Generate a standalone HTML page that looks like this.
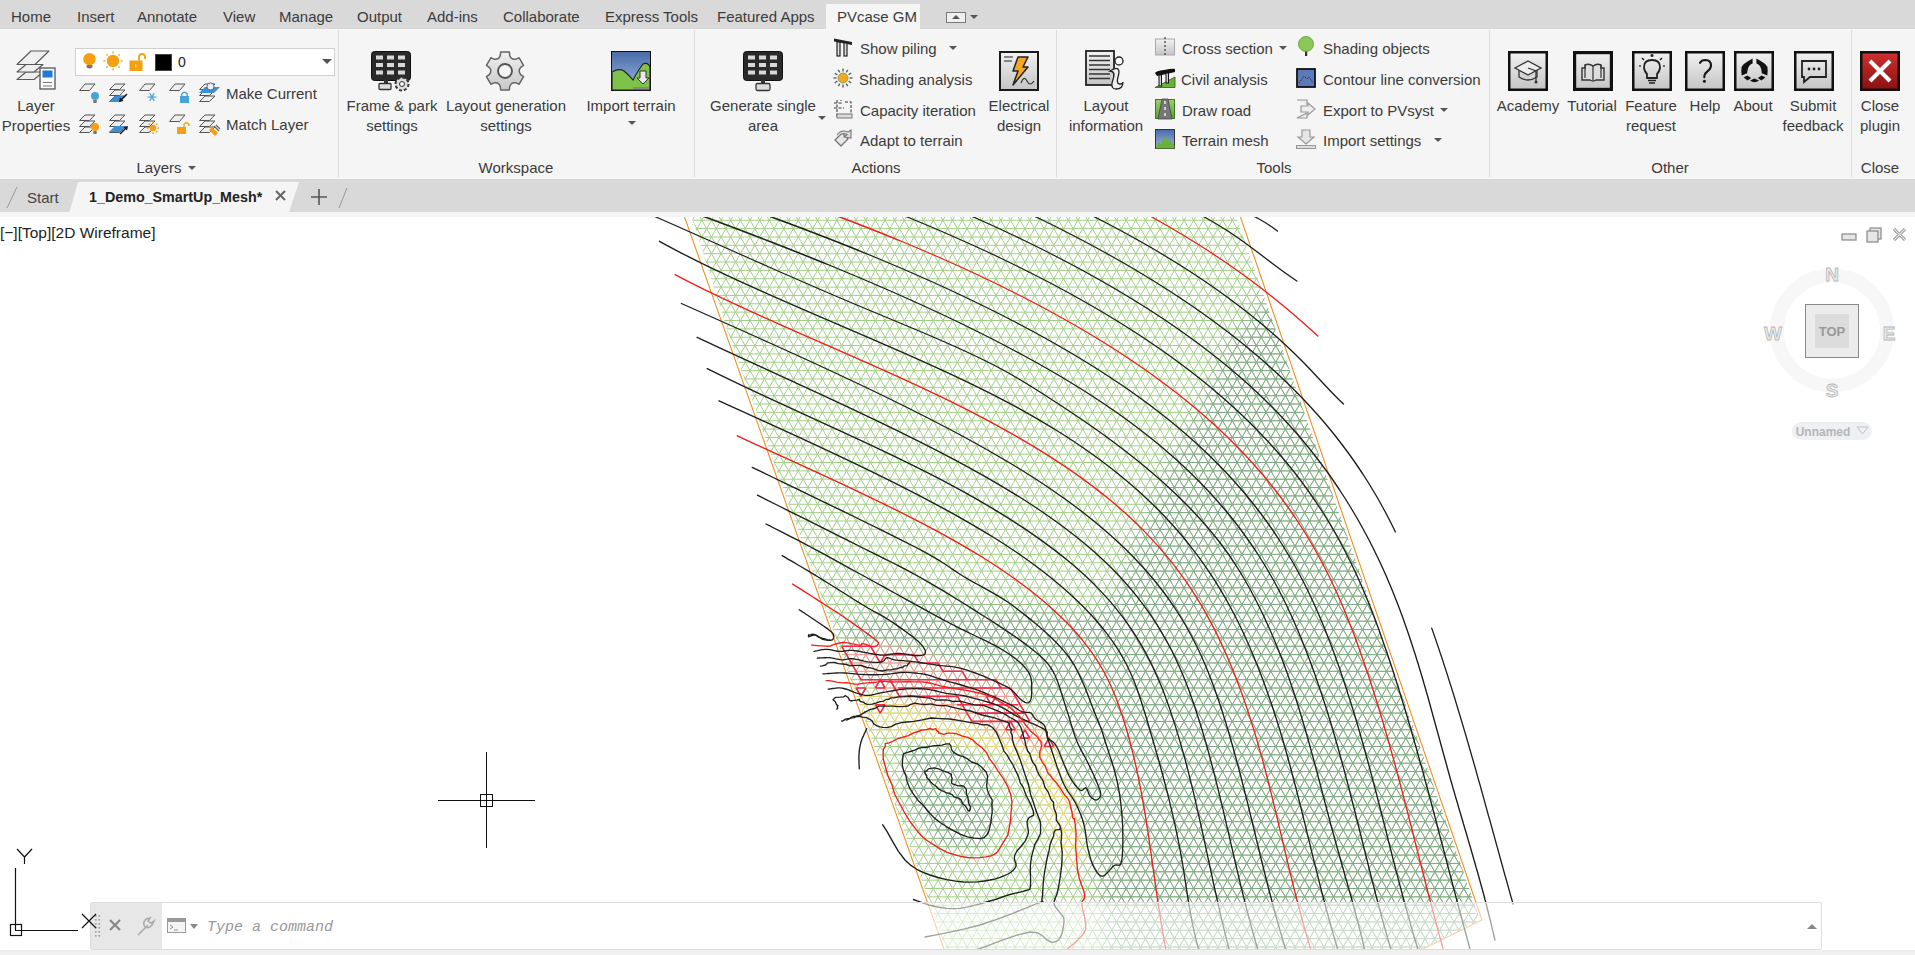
<!DOCTYPE html><html><head><meta charset="utf-8"><style>
*{margin:0;padding:0;box-sizing:border-box}
html,body{width:1915px;height:955px;overflow:hidden;background:#fff;font-family:"Liberation Sans",sans-serif;color:#333}
.a{position:absolute}
.t{position:absolute;font-size:15px;line-height:15px;white-space:nowrap;color:#3b3b3b}
.c{text-align:center}
#menu{left:0;top:0;width:1915px;height:29px;background:#d9d9d9}
#ribbon{left:0;top:29px;width:1915px;height:150px;background:#f5f5f5}
#tabs{left:0;top:179px;width:1915px;height:33px;background:#d9d9d9}
#strip{left:0;top:212px;width:1915px;height:5px;background:#f5f5f5}
.sep{position:absolute;top:30px;width:1px;height:147px;background:#dcdcdc}
svg{position:absolute;overflow:visible}
</style></head><body>
<div id="menu" class="a"></div><div id="ribbon" class="a"></div><div id="tabs" class="a"></div><div id="strip" class="a"></div>
<div class="a" style="left:826px;top:4px;width:94px;height:25px;background:#f5f5f5"></div>
<div class="t" style="left:11px;top:9px">Home</div>
<div class="t" style="left:77px;top:9px">Insert</div>
<div class="t" style="left:137px;top:9px">Annotate</div>
<div class="t" style="left:223px;top:9px">View</div>
<div class="t" style="left:279px;top:9px">Manage</div>
<div class="t" style="left:357px;top:9px">Output</div>
<div class="t" style="left:427px;top:9px">Add-ins</div>
<div class="t" style="left:503px;top:9px">Collaborate</div>
<div class="t" style="left:605px;top:9px">Express Tools</div>
<div class="t" style="left:717px;top:9px">Featured Apps</div>
<div class="t" style="left:837px;top:9px">PVcase GM</div>
<div class="sep" style="left:338px"></div>
<div class="sep" style="left:694px"></div>
<div class="sep" style="left:1056px"></div>
<div class="sep" style="left:1489px"></div>
<div class="sep" style="left:1851px"></div>
<div class="t c" style="left:99px;width:120px;top:160px">Layers</div>
<div class="t c" style="left:456px;width:120px;top:160px">Workspace</div>
<div class="t c" style="left:816px;width:120px;top:160px">Actions</div>
<div class="t c" style="left:1214px;width:120px;top:160px">Tools</div>
<div class="t c" style="left:1610px;width:120px;top:160px">Other</div>
<div class="t c" style="left:1820px;width:120px;top:160px">Close</div>
<div class="t c" style="left:-34px;width:140px;top:98px">Layer</div>
<div class="t c" style="left:-34px;width:140px;top:118px">Properties</div>
<div class="t c" style="left:322px;width:140px;top:98px">Frame &amp; park</div>
<div class="t c" style="left:322px;width:140px;top:118px">settings</div>
<div class="t c" style="left:436px;width:140px;top:98px">Layout generation</div>
<div class="t c" style="left:436px;width:140px;top:118px">settings</div>
<div class="t c" style="left:561px;width:140px;top:98px">Import terrain</div>
<div class="t c" style="left:693px;width:140px;top:98px">Generate single</div>
<div class="t c" style="left:693px;width:140px;top:118px">area</div>
<div class="t c" style="left:949px;width:140px;top:98px">Electrical</div>
<div class="t c" style="left:949px;width:140px;top:118px">design</div>
<div class="t c" style="left:1036px;width:140px;top:98px">Layout</div>
<div class="t c" style="left:1036px;width:140px;top:118px">information</div>
<div class="t c" style="left:1458px;width:140px;top:98px">Academy</div>
<div class="t c" style="left:1522px;width:140px;top:98px">Tutorial</div>
<div class="t c" style="left:1581px;width:140px;top:98px">Feature</div>
<div class="t c" style="left:1581px;width:140px;top:118px">request</div>
<div class="t c" style="left:1635px;width:140px;top:98px">Help</div>
<div class="t c" style="left:1683px;width:140px;top:98px">About</div>
<div class="t c" style="left:1743px;width:140px;top:98px">Submit</div>
<div class="t c" style="left:1743px;width:140px;top:118px">feedback</div>
<div class="t c" style="left:1810px;width:140px;top:98px">Close</div>
<div class="t c" style="left:1810px;width:140px;top:118px">plugin</div>
<div class="t" style="left:226px;top:86px">Make Current</div>
<div class="t" style="left:226px;top:117px">Match Layer</div>
<div class="t" style="left:860px;top:41px">Show piling</div>
<div class="t" style="left:859px;top:72px">Shading analysis</div>
<div class="t" style="left:860px;top:103px">Capacity iteration</div>
<div class="t" style="left:860px;top:133px">Adapt to terrain</div>
<div class="t" style="left:1182px;top:41px">Cross section</div>
<div class="t" style="left:1181px;top:72px">Civil analysis</div>
<div class="t" style="left:1182px;top:103px">Draw road</div>
<div class="t" style="left:1182px;top:133px">Terrain mesh</div>
<div class="t" style="left:1323px;top:41px">Shading objects</div>
<div class="t" style="left:1323px;top:72px">Contour line conversion</div>
<div class="t" style="left:1323px;top:103px">Export to PVsyst</div>
<div class="t" style="left:1323px;top:133px">Import settings</div>
<svg width="0" height="0" style="position:absolute"><defs>
<linearGradient id="gbox" x1="0" y1="0" x2="0" y2="1"><stop offset="0" stop-color="#f2f2f2"/><stop offset="1" stop-color="#c4c4c4"/></linearGradient>
<linearGradient id="gsky" x1="0" y1="0" x2="0" y2="1"><stop offset="0" stop-color="#4a6aa8"/><stop offset="1" stop-color="#9bb8e0"/></linearGradient>
<linearGradient id="ggear" x1="0" y1="0" x2="0" y2="1"><stop offset="0" stop-color="#f0f0f0"/><stop offset="1" stop-color="#c8c8c8"/></linearGradient>
<linearGradient id="gred" x1="0" y1="0" x2="0" y2="1"><stop offset="0" stop-color="#d03030"/><stop offset="1" stop-color="#8a1010"/></linearGradient>
<linearGradient id="ggrass" x1="0" y1="0" x2="0" y2="1"><stop offset="0" stop-color="#9ad06a"/><stop offset="1" stop-color="#5aa030"/></linearGradient>
</defs></svg><svg style="left:16px;top:50px" width="42" height="42" viewBox="0 0 42 42" ><g fill="#f0f0f0" stroke="#5a5a5a" stroke-width="1.2" stroke-linejoin="round">
<path d="M1 29.5 L10 22 L27 22 L18 29.5 Z" fill="#eee"/>
<path d="M1 22 L10 14.5 L27 14.5 L18 22 Z" fill="#eee"/>
<path d="M1 14.5 L15 1 L33 1 L19 14.5 Z"/>
</g>
<rect x="24" y="18" width="15" height="21" fill="#fafafa" stroke="#555" stroke-width="1.3"/>
<rect x="26.5" y="20.5" width="10" height="7" fill="#1e7ad6"/>
<path d="M27 32.5 H36 M27 36 H36" stroke="#777" stroke-width="1"/></svg><div class="a" style="left:75px;top:48px;width:260px;height:28px;background:#fff;border:1px solid #cfcfcf"></div><svg style="left:83px;top:52.5px" width="14" height="18" viewBox="0 0 14 18" ><circle cx="6.5" cy="6.2" r="6.2" fill="#f4a013"/><path d="M3.6 12 H9.4 V14.5 Q6.5 16.5 3.6 14.5 Z" fill="#777"/></svg><svg style="left:103.3px;top:51.4px" width="20" height="20" viewBox="0 0 20 20" ><circle cx="10" cy="10" r="6.2" fill="#f4a013"/><g stroke="#f4a013" stroke-width="1.3"><line x1="17.6" y1="10.0" x2="19.6" y2="10.0"/><line x1="15.4" y1="15.4" x2="16.8" y2="16.8"/><line x1="10.0" y1="17.6" x2="10.0" y2="19.6"/><line x1="4.6" y1="15.4" x2="3.2" y2="16.8"/><line x1="2.4" y1="10.0" x2="0.4" y2="10.0"/><line x1="4.6" y1="4.6" x2="3.2" y2="3.2"/><line x1="10.0" y1="2.4" x2="10.0" y2="0.4"/><line x1="15.4" y1="4.6" x2="16.8" y2="3.2"/></g></svg><svg style="left:128.5px;top:52.5px" width="20" height="20" viewBox="0 0 20 20" ><g transform="scale(1.0)"><rect x="0.5" y="7.5" width="13" height="10.5" fill="#f4a013"/><path d="M10 7.5 V4 Q10 1 13 1 Q16 1 16 4 V6" fill="none" stroke="#f4a013" stroke-width="1.8"/><rect x="6.3" y="11.5" width="1" height="3" fill="#fff"/></g></svg><div class="a" style="left:155px;top:54px;width:17px;height:17px;background:#000;border:1px solid #444"></div><div class="t" style="left:178px;top:55px;font-size:14px;color:#222">0</div><svg style="left:322px;top:59px" width="10" height="6" viewBox="0 0 10 6" ><path d="M0 0 H10 L5 5 Z" fill="#555"/></svg><svg style="left:79px;top:83px" width="20" height="20" viewBox="0 0 20 20" ><g fill="#eee" stroke="#555" stroke-width="1" stroke-linejoin="round"><path d="M0.5 7.5 L6 1 H16 L10.5 7.5 Z"/></g></svg><svg style="left:79px;top:114px" width="20" height="20" viewBox="0 0 20 20" ><g fill="#eee" stroke="#555" stroke-width="1" stroke-linejoin="round"><path d="M0.5 18.5 L6 13 H16 L10.5 18.5 Z"/><path d="M0.5 12.5 L6 7 H16 L10.5 12.5 Z"/><path d="M0.5 6.5 L6 1 H16 L10.5 6.5 Z"/></g></svg><svg style="left:109px;top:83px" width="20" height="20" viewBox="0 0 20 20" ><g fill="#eee" stroke="#555" stroke-width="1" stroke-linejoin="round"><path d="M0.5 18.5 L6 13 H16 L10.5 18.5 Z"/><path d="M0.5 12.5 L6 7 H16 L10.5 12.5 Z"/><path d="M0.5 6.5 L6 1 H16 L10.5 6.5 Z"/></g></svg><svg style="left:109px;top:114px" width="20" height="20" viewBox="0 0 20 20" ><g fill="#eee" stroke="#555" stroke-width="1" stroke-linejoin="round"><path d="M0.5 18.5 L6 13 H16 L10.5 18.5 Z"/><path d="M0.5 12.5 L6 7 H16 L10.5 12.5 Z"/><path d="M0.5 6.5 L6 1 H16 L10.5 6.5 Z"/></g></svg><svg style="left:139px;top:83px" width="20" height="20" viewBox="0 0 20 20" ><g fill="#eee" stroke="#555" stroke-width="1" stroke-linejoin="round"><path d="M0.5 7.5 L6 1 H16 L10.5 7.5 Z"/></g></svg><svg style="left:139px;top:114px" width="20" height="20" viewBox="0 0 20 20" ><g fill="#eee" stroke="#555" stroke-width="1" stroke-linejoin="round"><path d="M0.5 18.5 L6 13 H16 L10.5 18.5 Z"/><path d="M0.5 12.5 L6 7 H16 L10.5 12.5 Z"/><path d="M0.5 6.5 L6 1 H16 L10.5 6.5 Z"/></g></svg><svg style="left:169px;top:83px" width="20" height="20" viewBox="0 0 20 20" ><g fill="#eee" stroke="#555" stroke-width="1" stroke-linejoin="round"><path d="M0.5 7.5 L6 1 H16 L10.5 7.5 Z"/></g></svg><svg style="left:169px;top:114px" width="20" height="20" viewBox="0 0 20 20" ><g fill="#eee" stroke="#555" stroke-width="1" stroke-linejoin="round"><path d="M0.5 7.5 L6 1 H16 L10.5 7.5 Z"/></g></svg><svg style="left:199px;top:83px" width="20" height="20" viewBox="0 0 20 20" ><g fill="#eee" stroke="#555" stroke-width="1" stroke-linejoin="round"><path d="M0.5 18.5 L6 13 H16 L10.5 18.5 Z"/><path d="M0.5 12.5 L6 7 H16 L10.5 12.5 Z"/><path d="M0.5 6.5 L6 1 H16 L10.5 6.5 Z"/></g></svg><svg style="left:199px;top:114px" width="20" height="20" viewBox="0 0 20 20" ><g fill="#eee" stroke="#555" stroke-width="1" stroke-linejoin="round"><path d="M0.5 18.5 L6 13 H16 L10.5 18.5 Z"/><path d="M0.5 12.5 L6 7 H16 L10.5 12.5 Z"/><path d="M0.5 6.5 L6 1 H16 L10.5 6.5 Z"/></g></svg><svg style="left:89px;top:90px" width="12" height="14" viewBox="0 0 12 14" ><circle cx="6" cy="6" r="4" fill="#4aa3d8"/><rect x="4.3" y="10" width="3.4" height="3" fill="#777"/></svg><svg style="left:109px;top:93px" width="22" height="11" viewBox="0 0 22 11" ><path d="M0 9 L6 3 H17 L11 9 Z" fill="#3d8fd6"/><path d="M18 1 L12 7" stroke="#111" stroke-width="1.4"/><path d="M10 9 L11 4.5 L14.5 8 Z" fill="#111"/></svg><svg style="left:147px;top:92px" width="10" height="10" viewBox="0 0 10 10" ><g stroke="#4aa3d8" stroke-width="1.2"><line x1="9.5" y1="5.0" x2="0.5" y2="5.0"/><line x1="7.2" y1="8.9" x2="2.7" y2="1.1"/><line x1="2.8" y1="8.9" x2="7.2" y2="1.1"/></g></svg><svg style="left:179px;top:90px" width="12" height="14" viewBox="0 0 12 14" ><rect x="1" y="6" width="9" height="7" fill="#4aa3d8"/><path d="M2.8 6 V4 Q5.5 0.5 8.2 4 V6" fill="none" stroke="#4aa3d8" stroke-width="1.4"/></svg><svg style="left:199px;top:82px" width="22" height="12" viewBox="0 0 22 12" ><path d="M0 11 L6 5 H21 L15 11 Z" fill="#3d8fd6"/><circle cx="11.5" cy="4.5" r="3.6" fill="#eee" stroke="#666" stroke-width="1"/></svg><svg style="left:89px;top:121px" width="12" height="14" viewBox="0 0 12 14" ><circle cx="6" cy="6" r="4" fill="#f4a013"/><rect x="4.3" y="10" width="3.4" height="3" fill="#777"/></svg><svg style="left:109px;top:124px" width="22" height="11" viewBox="0 0 22 11" ><path d="M0 8 L6 2 H17 L11 8 Z" fill="#3d8fd6"/><path d="M11 10 L17 4" stroke="#111" stroke-width="1.4"/><path d="M19 2 L18 6.5 L14.5 3 Z" fill="#111"/></svg><svg style="left:147px;top:122px" width="12" height="12" viewBox="0 0 12 12" ><circle cx="6" cy="6" r="3.2" fill="#f4a013"/><circle cx="11.2" cy="6.0" r="0.9" fill="#f4a013"/><circle cx="9.7" cy="9.7" r="0.9" fill="#f4a013"/><circle cx="6.0" cy="11.2" r="0.9" fill="#f4a013"/><circle cx="2.3" cy="9.7" r="0.9" fill="#f4a013"/><circle cx="0.8" cy="6.0" r="0.9" fill="#f4a013"/><circle cx="2.3" cy="2.3" r="0.9" fill="#f4a013"/><circle cx="6.0" cy="0.8" r="0.9" fill="#f4a013"/><circle cx="9.7" cy="2.3" r="0.9" fill="#f4a013"/></svg><svg style="left:176px;top:121px" width="14" height="14" viewBox="0 0 14 14" ><rect x="1" y="6" width="9" height="7" fill="#f4a013"/><path d="M8 6 V3.5 Q10.5 0 13 3.5 V5" fill="none" stroke="#f4a013" stroke-width="1.4"/></svg><svg style="left:208px;top:124px" width="12" height="11" viewBox="0 0 12 11" ><path d="M1 6 L4 3 L10 9 L7 12 Z" fill="#f4a013"/><path d="M6 2 L11 7 M8 1 L12 5" stroke="#666" stroke-width="1.2"/></svg><svg style="left:371px;top:51px" width="42" height="42" viewBox="0 0 42 42" ><rect x="0.5" y="0.5" width="39" height="29" rx="3" fill="#2a2a2a" stroke="#111"/><rect x="5" y="4.5" width="7" height="4" fill="#d8d8d8"/><rect x="16" y="4.5" width="7" height="4" fill="#d8d8d8"/><rect x="27" y="4.5" width="7" height="4" fill="#d8d8d8"/><rect x="5" y="12.0" width="7" height="4" fill="#d8d8d8"/><rect x="16" y="12.0" width="7" height="4" fill="#d8d8d8"/><rect x="27" y="12.0" width="7" height="4" fill="#d8d8d8"/><rect x="5" y="19.5" width="7" height="4" fill="#d8d8d8"/><rect x="16" y="19.5" width="7" height="4" fill="#d8d8d8"/><rect x="27" y="19.5" width="7" height="4" fill="#d8d8d8"/><rect x="13" y="29" width="4" height="4" fill="#333"/><rect x="8" y="32.5" width="12" height="6" rx="1" fill="#ddd" stroke="#333" stroke-width="1.3"/><circle cx="31" cy="33" r="6.5" fill="#ddd" stroke="#333" stroke-width="2" stroke-dasharray="3 2"/><circle cx="31" cy="33" r="2.5" fill="#f5f5f5" stroke="#333"/></svg><svg style="left:485px;top:51px" width="40" height="40" viewBox="0 0 40 40" ><path d="M15.26 4.51L15.64 1.10L24.36 1.10L24.74 4.51Q26.30 9.09 31.05 8.15L34.19 6.77L38.55 14.33L35.78 16.36Q32.60 20.00 35.78 23.64L38.55 25.67L34.19 33.23L31.05 31.85Q26.30 30.91 24.74 35.49L24.36 38.90L15.64 38.90L15.26 35.49Q13.70 30.91 8.95 31.85L5.81 33.23L1.45 25.67L4.22 23.64Q7.40 20.00 4.22 16.36L1.45 14.33L5.81 6.77L8.95 8.15Q13.70 9.09 15.26 4.51Z" fill="url(#ggear)" stroke="#666" stroke-width="1.5" stroke-linejoin="round"/><circle cx="20" cy="20" r="7" fill="#f5f5f5" stroke="#555" stroke-width="1.9"/></svg><svg style="left:611px;top:51px" width="40" height="40" viewBox="0 0 40 40" ><rect x="0.5" y="0.5" width="39" height="39" fill="url(#gsky)" stroke="#111"/><path d="M1 21 Q8 17 13 20 Q19 25 22 29 Q28 18 32 13 Q37 11 39 16 V39 H1 Z" fill="#7ec24a" stroke="#222" stroke-width="1.2"/><path d="M29 20 H35 V27 H38 L32 33 L26 27 H29 Z" fill="#e8e8e8" stroke="#333" stroke-width="1"/><rect x="22" y="36" width="16" height="2" fill="#888"/></svg><svg style="left:743px;top:51px" width="42" height="42" viewBox="0 0 42 42" ><rect x="0.5" y="0.5" width="39" height="29" rx="3" fill="#2a2a2a" stroke="#111"/><rect x="5" y="4.5" width="7" height="4" fill="#d8d8d8"/><rect x="16" y="4.5" width="7" height="4" fill="#d8d8d8"/><rect x="27" y="4.5" width="7" height="4" fill="#d8d8d8"/><rect x="5" y="12.0" width="7" height="4" fill="#d8d8d8"/><rect x="16" y="12.0" width="7" height="4" fill="#d8d8d8"/><rect x="27" y="12.0" width="7" height="4" fill="#d8d8d8"/><rect x="5" y="19.5" width="7" height="4" fill="#d8d8d8"/><rect x="16" y="19.5" width="7" height="4" fill="#d8d8d8"/><rect x="27" y="19.5" width="7" height="4" fill="#d8d8d8"/><rect x="18" y="29" width="4" height="4" fill="#333"/><rect x="13" y="32.5" width="14" height="7" rx="1.5" fill="#ddd" stroke="#333" stroke-width="1.3"/></svg><svg style="left:833px;top:37px" width="20" height="20" viewBox="0 0 20 20" ><path d="M1 1.5 L19 5 L19 8 L1 4.5 Z" fill="#222"/><rect x="4" y="5" width="3" height="14" fill="#ddd" stroke="#222" stroke-width="1.2"/><rect x="11" y="6" width="3" height="13" fill="#ddd" stroke="#222" stroke-width="1.2"/></svg><svg style="left:833px;top:68px" width="20" height="20" viewBox="0 0 20 20" ><circle cx="10" cy="10" r="5" fill="#f5a623" stroke="#6aa84f" stroke-width="0.8"/><g stroke="#666" stroke-width="1.5"><line x1="16.5" y1="10.0" x2="19.5" y2="10.0"/><line x1="15.6" y1="13.2" x2="18.2" y2="14.8"/><line x1="13.2" y1="15.6" x2="14.8" y2="18.2"/><line x1="10.0" y1="16.5" x2="10.0" y2="19.5"/><line x1="6.8" y1="15.6" x2="5.3" y2="18.2"/><line x1="4.4" y1="13.2" x2="1.8" y2="14.8"/><line x1="3.5" y1="10.0" x2="0.5" y2="10.0"/><line x1="4.4" y1="6.8" x2="1.8" y2="5.3"/><line x1="6.7" y1="4.4" x2="5.2" y2="1.8"/><line x1="10.0" y1="3.5" x2="10.0" y2="0.5"/><line x1="13.2" y1="4.4" x2="14.8" y2="1.8"/><line x1="15.6" y1="6.7" x2="18.2" y2="5.2"/></g></svg><svg style="left:833px;top:99px" width="20" height="20" viewBox="0 0 20 20" ><g fill="none" stroke="#777" stroke-width="1.6" stroke-dasharray="3 1.5"><path d="M1 4 H8 V1 M12 3 H18 V14 M4 1 V17 H19"/><path d="M1 9 H11"/></g><rect x="4" y="15" width="15" height="4" fill="#ddd" stroke="#777"/></svg><svg style="left:833px;top:129px" width="20" height="20" viewBox="0 0 20 20" ><path d="M2 11 L9 4 L15 10 L8 17 Z" fill="#e6e6e6" stroke="#777" stroke-width="1.3"/><path d="M4 6 Q8 0 15 3 L18 1 L18 9 L11 8 L14 5.5 Q9 3 6 7" fill="#ddd" stroke="#777" stroke-width="1.1"/></svg><svg style="left:999px;top:51px" width="40" height="40" viewBox="0 0 40 40" ><rect x="1" y="1" width="38" height="38" fill="url(#gbox)" stroke="#1a1a1a" stroke-width="2"/><path d="M5 6 H14 M5 10 H13" stroke="#666" stroke-width="1.3"/><path d="M19 6 L29 6 L24 16 L29 16 L14 34 L19 20 L14 20 Z" fill="#f5a623" stroke="#222" stroke-width="1.5" stroke-linejoin="round"/><path d="M22 32 Q25 24 28 30 Q31 36 35 30" fill="none" stroke="#333" stroke-width="1.2"/></svg><svg style="left:1085px;top:50px" width="40" height="41" viewBox="0 0 40 41" ><rect x="1" y="1" width="28" height="34" fill="url(#gbox)" stroke="#222" stroke-width="1.8"/><line x1="4" y1="6.0" x2="25" y2="6.0" stroke="#333" stroke-width="1.5"/><line x1="4" y1="10.5" x2="25" y2="10.5" stroke="#333" stroke-width="1.5"/><line x1="4" y1="15.0" x2="25" y2="15.0" stroke="#333" stroke-width="1.5"/><line x1="4" y1="19.5" x2="25" y2="19.5" stroke="#333" stroke-width="1.5"/><line x1="4" y1="24.0" x2="25" y2="24.0" stroke="#333" stroke-width="1.5"/><line x1="4" y1="28.5" x2="25" y2="28.5" stroke="#333" stroke-width="1.5"/><circle cx="34" cy="11" r="4" fill="#fafafa" stroke="#222" stroke-width="1.3"/><path d="M25 21 Q31 17 33 19 Q35 21 33 27 Q31 34 35 34 Q38 34 38 32 Q38 39 31 39 Q26 39 27 33 Q29 27 29 24 Q28 21 25 21 Z" fill="#eee" stroke="#222" stroke-width="1.3"/></svg><svg style="left:1155px;top:37px" width="20" height="20" viewBox="0 0 20 20" ><rect x="0.5" y="2" width="19" height="16" fill="url(#gbox)" stroke="#aaa"/><path d="M10 0 V20" stroke="#444" stroke-width="1.3" stroke-dasharray="2 2"/></svg><svg style="left:1155px;top:68px" width="20" height="20" viewBox="0 0 20 20" ><path d="M0 19.5 L20 9 V19.5 Z" fill="#6ab03c" stroke="#2b5e10" stroke-width="0.8"/><path d="M0 5 Q1 3 9 2 Q18 0 20 1 V4 Q12 6 2 8 Z" fill="#111"/><rect x="4" y="7" width="2.5" height="11" fill="#ccc" stroke="#111" stroke-width="1"/><rect x="11" y="5" width="2.5" height="10" fill="#ccc" stroke="#111" stroke-width="1"/></svg><svg style="left:1155px;top:99px" width="20" height="20" viewBox="0 0 20 20" ><rect x="0.5" y="0.5" width="19" height="19" fill="url(#ggrass)" stroke="#3d7a20"/><path d="M7 0 H13 L17 20 H3 Z" fill="#777" stroke="#444" stroke-width="0.8"/><path d="M10 2 V5 M10 8 V11 M10 14 V17" stroke="#fff" stroke-width="1.3"/></svg><svg style="left:1155px;top:129px" width="20" height="20" viewBox="0 0 20 20" ><rect x="0.5" y="0.5" width="19" height="19" fill="url(#gsky)" stroke="#333"/><path d="M0.5 19.5 L3 13 L6 15 L9 7 L12 12 L14 10 L19.5 17 V19.5 Z" fill="#6ab03c"/></svg><svg style="left:1296px;top:36px" width="20" height="20" viewBox="0 0 20 20" ><rect x="9" y="12" width="2.2" height="8" fill="#3a2a20"/><circle cx="10" cy="8" r="7.5" fill="#8cc858" stroke="#5a9a30" stroke-width="0.8"/></svg><svg style="left:1296px;top:68px" width="20" height="20" viewBox="0 0 20 20" ><rect x="1" y="1" width="18" height="18" fill="#5d7ab8" stroke="#111" stroke-width="1.8"/><path d="M3 15 L8 8 L11 11 L13 9 L17 15" fill="none" stroke="#334" stroke-width="1" stroke-dasharray="1.5 1"/></svg><svg style="left:1296px;top:99px" width="20" height="20" viewBox="0 0 20 20" ><path d="M1 1 H11 V6 M11 14 V19 H1 Z" fill="#eee" stroke="#999" stroke-width="1.2"/><path d="M5 7 H12 V4 L19 10 L12 16 V13 H5 Z" fill="#eee" stroke="#999" stroke-width="1.2"/></svg><svg style="left:1296px;top:129px" width="20" height="20" viewBox="0 0 20 20" ><path d="M6 1 H14 V8 H18 L10 15 L2 8 H6 Z" fill="#e6e6e6" stroke="#999" stroke-width="1.2"/><rect x="0.5" y="16.5" width="19" height="3" fill="#ddd" stroke="#999"/></svg><svg style="left:1508px;top:51px" width="40" height="40" viewBox="0 0 40 40" ><rect x="1.25" y="1.25" width="37.5" height="37.5" fill="url(#gbox)" stroke="#111" stroke-width="2.5"/><path d="M7 17 L20 10 L33 17 L20 24 Z" fill="#eee" stroke="#333" stroke-width="1.3"/><path d="M11 19.5 V26 Q20 32 29 26 V19.5" fill="none" stroke="#333" stroke-width="1.3"/><path d="M20 17 L28 20 V30" stroke="#333" stroke-width="1.3" fill="none"/><circle cx="28" cy="31" r="1.5" fill="#333"/></svg><svg style="left:1573px;top:51px" width="40" height="40" viewBox="0 0 40 40" ><rect x="1.6" y="1.6" width="36.8" height="36.8" fill="url(#gbox)" stroke="#111" stroke-width="3.2"/><path d="M9 17 H12 V14 Q16 12 20 15 Q24 12 28 14 V17 H31 V29 H23 Q20 31 17 29 H9 Z" fill="#ddd" stroke="#333" stroke-width="1.4"/><path d="M20 15 V29 M12 14 V27 M28 14 V27" stroke="#333" stroke-width="1.2"/></svg><svg style="left:1632px;top:51px" width="40" height="40" viewBox="0 0 40 40" ><rect x="1.25" y="1.25" width="37.5" height="37.5" fill="url(#gbox)" stroke="#111" stroke-width="2.5"/><path d="M15 23 Q12 20 12 16 Q12 9 20 9 Q28 9 28 16 Q28 20 25 23 V27 H15 Z" fill="none" stroke="#222" stroke-width="1.8"/><path d="M16 29.5 H24 M17 32 H23" stroke="#222" stroke-width="1.5"/><circle cx="20" cy="4.5" r="1.5" fill="#222"/><path d="M10 7 L12 9 M30 7 L28 9" stroke="#222" stroke-width="1.6"/><circle cx="8" cy="15" r="1" fill="#444"/><circle cx="32" cy="15" r="1" fill="#444"/></svg><svg style="left:1685px;top:51px" width="40" height="40" viewBox="0 0 40 40" ><rect x="1.25" y="1.25" width="37.5" height="37.5" fill="url(#gbox)" stroke="#111" stroke-width="2.5"/><path d="M15 11.8 Q16.5 9 20.5 9 Q26 9.3 26 14.5 Q26 17.8 22.2 20.6 Q19.3 22.8 19.3 26.2" fill="none" stroke="#151515" stroke-width="2.1" stroke-linecap="round"/><circle cx="19.4" cy="30.2" r="1.5" fill="#151515"/></svg><svg style="left:1734px;top:51px" width="40" height="40" viewBox="0 0 40 40" ><rect x="1.25" y="1.25" width="37.5" height="37.5" fill="url(#gbox)" stroke="#111" stroke-width="2.5"/><g fill="#111"><path d="M18.6 7.4 V12.6 Q15.2 13.6 14 17.5 Q13.3 20.3 13.2 22.2 L7.7 24.6 Q7 19 7.6 15.8 Q9.3 12.6 13.5 10.4 Z"/><path d="M22.4 7.4 V12.6 Q25.8 13.6 27 17.5 Q27.7 20.3 27.8 22.2 L33.3 24.6 Q34 19 33.4 15.8 Q31.7 12.6 27.5 10.4 Z"/><path d="M9.6 26.6 L13.2 24.6 L17.2 27.1 L13.6 29.4 Z"/><path d="M16 29.6 L20.5 27.4 L25 29.6 Q20.5 33 16 29.6 Z"/><path d="M23.8 27.1 L27.8 24.6 L31.4 26.6 L27.4 29.4 Z"/></g></svg><svg style="left:1794px;top:51px" width="40" height="40" viewBox="0 0 40 40" ><rect x="1.25" y="1.25" width="37.5" height="37.5" fill="url(#gbox)" stroke="#111" stroke-width="2.5"/><path d="M8 10 H32 V26 H16 L10 31 V26 H8 Z" fill="none" stroke="#222" stroke-width="1.8"/><circle cx="15" cy="18" r="1.4" fill="#222"/><circle cx="20" cy="18" r="1.4" fill="#222"/><circle cx="25" cy="18" r="1.4" fill="#222"/></svg><svg style="left:1860px;top:51px" width="40" height="40" viewBox="0 0 40 40" ><rect x="1.25" y="1.25" width="37.5" height="37.5" fill="url(#gred)" stroke="#111" stroke-width="2.5"/><path d="M10 10 L30 30 M30 10 L10 30" stroke="#fff" stroke-width="4"/></svg><svg style="left:949px;top:46px" width="8" height="5" viewBox="0 0 8 5" ><path d="M0 0 H8 L4 4 Z" fill="#555"/></svg><svg style="left:1279px;top:46px" width="8" height="5" viewBox="0 0 8 5" ><path d="M0 0 H8 L4 4 Z" fill="#555"/></svg><svg style="left:1440px;top:108px" width="8" height="5" viewBox="0 0 8 5" ><path d="M0 0 H8 L4 4 Z" fill="#555"/></svg><svg style="left:1434px;top:138px" width="8" height="5" viewBox="0 0 8 5" ><path d="M0 0 H8 L4 4 Z" fill="#555"/></svg><svg style="left:628px;top:121px" width="8" height="5" viewBox="0 0 8 5" ><path d="M0 0 H8 L4 4 Z" fill="#555"/></svg><svg style="left:818px;top:116px" width="8" height="5" viewBox="0 0 8 5" ><path d="M0 0 H8 L4 4 Z" fill="#555"/></svg><svg style="left:188px;top:166px" width="8" height="5" viewBox="0 0 8 5" ><path d="M0 0 H8 L4 4 Z" fill="#555"/></svg>
<svg style="left:946px;top:12px" width="20" height="11" viewBox="0 0 20 11" ><rect x="0.5" y="0.5" width="19" height="10" fill="#f0f0f0" stroke="#777"/><path d="M6 7 L10 3 L14 7 Z" fill="#555"/></svg>
<svg style="left:970px;top:15px" width="8" height="5" viewBox="0 0 8 5" ><path d="M0 0 H8 L4 4 Z" fill="#555"/></svg>
<svg style="left:0;top:179px" width="400" height="38"><path d="M78 3 H299 L289 33 L284 38 H68 Z" fill="#f5f5f5"/><path d="M7 29 L17 8 M339 29 L347 9" stroke="#999" stroke-width="1"/><path d="M276 12 L285 21 M285 12 L276 21" stroke="#666" stroke-width="2"/><path d="M311 18 H327 M319 10 V26" stroke="#555" stroke-width="1.6"/></svg>
<div class="t" style="left:27px;top:190px;color:#444">Start</div>
<div class="t" style="left:89px;top:190px;font-weight:bold;font-size:14.3px;color:#222">1_Demo_SmartUp_Mesh*</div>
<svg style="left:0;top:0" width="1915" height="955" viewBox="0 0 1915 955">
<defs>
<clipPath id="vp"><rect x="0" y="217" width="1915" height="738"/></clipPath>
<clipPath id="pg"><polygon points="686.5,200.0 1230.6,200.0 1480.0,920.0 1370.1,975.0 955.2,975.0 727.1,330.0"/></clipPath><clipPath id="pg2"><polygon points="686.5,200.0 1230.6,200.0 1480.0,920.0 1370.1,975.0 955.2,975.0 727.1,330.0"/></clipPath>
<filter id="blur8" x="-20%" y="-20%" width="140%" height="140%"><feGaussianBlur stdDeviation="9"/></filter>
<filter id="blur4" x="-20%" y="-20%" width="140%" height="140%"><feGaussianBlur stdDeviation="4"/></filter>
<mask id="mdark" maskUnits="userSpaceOnUse" x="0" y="0" width="1915" height="955"><polygon points="1268,292 1224,350 1195,415 1170,458 1132,546 1113,596 1088,612 1040,608 968,604 921,602 890,608 843,624 836,640 900,650 1000,670 1040,700 1062,740 1075,790 1095,860 1110,975 1560,975 1560,292" fill="#fff" filter="url(#blur8)"/><polygon points="900,748 950,742 990,772 995,830 980,850 940,845 905,800" fill="#fff" filter="url(#blur4)"/></mask>
<mask id="mband" maskUnits="userSpaceOnUse" x="0" y="0" width="1915" height="955"><polygon points="841,644 875,644 914,650 965,668 1010,684 1031,722 1052,745 1040,752 972,724 898,700 856,676" fill="#fff" filter="url(#blur4)"/></mask>
<mask id="myel" maskUnits="userSpaceOnUse" x="0" y="0" width="1915" height="955"><polygon points="856,690 898,697 957,697 972,718 1031,718 1055,745 1075,800 1085,860 1070,870 1045,820 1030,770 1000,752 940,742 878,733 860,722" fill="#fff" filter="url(#blur4)"/></mask>
</defs>
<g clip-path="url(#vp)">
<g clip-path="url(#pg)" fill="none" stroke-width="1">
<path d="M600 211.92H1560M600 220.27H1560M600 228.62H1560M600 236.98H1560M600 245.33H1560M600 253.68H1560M600 262.04H1560M600 270.39H1560M600 278.74H1560M600 287.09H1560M600 295.45H1560M600 303.80H1560M600 312.15H1560M600 320.51H1560M600 328.86H1560M600 337.21H1560M600 345.56H1560M600 353.92H1560M600 362.27H1560M600 370.62H1560M600 378.98H1560M600 387.33H1560M600 395.68H1560M600 404.03H1560M600 412.39H1560M600 420.74H1560M600 429.09H1560M600 437.45H1560M600 445.80H1560M600 454.15H1560M600 462.50H1560M600 470.86H1560M600 479.21H1560M600 487.56H1560M600 495.91H1560M600 504.27H1560M600 512.62H1560M600 520.97H1560M600 529.33H1560M600 537.68H1560M600 546.03H1560M600 554.38H1560M600 562.74H1560M600 571.09H1560M600 579.44H1560M600 587.80H1560M600 596.15H1560M600 604.50H1560M600 612.85H1560M600 621.21H1560M600 629.56H1560M600 637.91H1560M600 646.27H1560M600 654.62H1560M600 662.97H1560M600 671.32H1560M600 679.68H1560M600 688.03H1560M600 696.38H1560M600 704.74H1560M600 713.09H1560M600 721.44H1560M600 729.79H1560M600 738.15H1560M600 746.50H1560M600 754.85H1560M600 763.20H1560M600 771.56H1560M600 779.91H1560M600 788.26H1560M600 796.62H1560M600 804.97H1560M600 813.32H1560M600 821.67H1560M600 830.03H1560M600 838.38H1560M600 846.73H1560M600 855.09H1560M600 863.44H1560M600 871.79H1560M600 880.14H1560M600 888.50H1560M600 896.85H1560M600 905.20H1560M600 913.56H1560M600 921.91H1560M600 930.26H1560M600 938.61H1560M600 946.97H1560M600 955.32H1560M600 963.67H1560M179.09 217L608.06 960M188.73 217L617.70 960M198.38 217L627.35 960M208.02 217L636.99 960M217.67 217L646.64 960M227.31 217L656.28 960M236.96 217L665.93 960M246.60 217L675.57 960M256.25 217L685.22 960M265.89 217L694.86 960M275.54 217L704.51 960M285.18 217L714.15 960M294.83 217L723.80 960M304.47 217L733.44 960M314.12 217L743.09 960M323.76 217L752.73 960M333.41 217L762.38 960M343.05 217L772.02 960M352.70 217L781.67 960M362.34 217L791.31 960M371.99 217L800.96 960M381.63 217L810.60 960M391.28 217L820.25 960M400.92 217L829.89 960M410.57 217L839.54 960M420.21 217L849.18 960M429.86 217L858.83 960M439.50 217L868.47 960M449.15 217L878.12 960M458.79 217L887.76 960M468.44 217L897.41 960M478.08 217L907.05 960M487.73 217L916.70 960M497.37 217L926.34 960M507.02 217L935.99 960M516.66 217L945.63 960M526.31 217L955.28 960M535.95 217L964.92 960M545.60 217L974.57 960M555.24 217L984.21 960M564.89 217L993.86 960M574.53 217L1003.50 960M584.18 217L1013.15 960M593.82 217L1022.79 960M603.47 217L1032.44 960M613.11 217L1042.08 960M622.76 217L1051.73 960M632.40 217L1061.37 960M642.05 217L1071.02 960M651.69 217L1080.66 960M661.34 217L1090.31 960M670.98 217L1099.95 960M680.63 217L1109.60 960M690.27 217L1119.24 960M699.92 217L1128.89 960M709.56 217L1138.53 960M719.21 217L1148.18 960M728.85 217L1157.82 960M738.50 217L1167.47 960M748.14 217L1177.11 960M757.79 217L1186.76 960M767.43 217L1196.40 960M777.08 217L1206.05 960M786.72 217L1215.69 960M796.37 217L1225.34 960M806.01 217L1234.98 960M815.66 217L1244.63 960M825.30 217L1254.27 960M834.95 217L1263.92 960M844.59 217L1273.56 960M854.24 217L1283.21 960M863.88 217L1292.85 960M873.53 217L1302.50 960M883.17 217L1312.14 960M892.82 217L1321.79 960M902.46 217L1331.43 960M912.11 217L1341.08 960M921.75 217L1350.72 960M931.40 217L1360.37 960M941.04 217L1370.01 960M950.69 217L1379.66 960M960.33 217L1389.30 960M969.98 217L1398.95 960M979.62 217L1408.59 960M989.27 217L1418.24 960M998.91 217L1427.88 960M1008.56 217L1437.53 960M1018.20 217L1447.17 960M1027.85 217L1456.82 960M1037.49 217L1466.46 960M1047.14 217L1476.11 960M1056.78 217L1485.75 960M1066.43 217L1495.40 960M1076.07 217L1505.04 960M1085.72 217L1514.69 960M1095.36 217L1524.33 960M1105.01 217L1533.98 960M1114.65 217L1543.62 960M1124.30 217L1553.27 960M1133.94 217L1562.91 960M1143.59 217L1572.56 960M1153.23 217L1582.20 960M1162.88 217L1591.85 960M1172.52 217L1601.49 960M1182.17 217L1611.14 960M1191.81 217L1620.78 960M1201.46 217L1630.43 960M1211.10 217L1640.07 960M1220.75 217L1649.72 960M1230.39 217L1659.36 960M1240.04 217L1669.01 960M1249.68 217L1678.65 960M1259.33 217L1688.30 960M1268.97 217L1697.94 960M1278.62 217L1707.59 960M1288.26 217L1717.23 960M1297.91 217L1726.88 960M1307.55 217L1736.52 960M1317.20 217L1746.17 960M1326.84 217L1755.81 960M1336.49 217L1765.46 960M1346.13 217L1775.10 960M1355.78 217L1784.75 960M1365.42 217L1794.39 960M1375.07 217L1804.04 960M1384.71 217L1813.68 960M1394.36 217L1823.33 960M1404.00 217L1832.97 960M1413.65 217L1842.62 960M1423.29 217L1852.26 960M1432.94 217L1861.91 960M1442.58 217L1871.55 960M1452.23 217L1881.20 960M1461.87 217L1890.84 960M1471.52 217L1900.49 960M1481.16 217L1910.13 960M1490.81 217L1919.78 960M1500.45 217L1929.42 960M1510.10 217L1939.07 960M1519.74 217L1948.71 960M1529.39 217L1958.36 960M1539.03 217L1968.00 960M1548.68 217L1977.65 960M1558.32 217L1987.29 960M607.24 217L178.27 960M616.89 217L187.92 960M626.53 217L197.56 960M636.18 217L207.21 960M645.82 217L216.85 960M655.47 217L226.50 960M665.11 217L236.14 960M674.76 217L245.79 960M684.40 217L255.43 960M694.05 217L265.08 960M703.69 217L274.72 960M713.34 217L284.37 960M722.98 217L294.01 960M732.63 217L303.66 960M742.27 217L313.30 960M751.92 217L322.95 960M761.56 217L332.59 960M771.21 217L342.24 960M780.85 217L351.88 960M790.50 217L361.53 960M800.14 217L371.17 960M809.79 217L380.82 960M819.43 217L390.46 960M829.08 217L400.11 960M838.72 217L409.75 960M848.37 217L419.40 960M858.01 217L429.04 960M867.66 217L438.69 960M877.30 217L448.33 960M886.95 217L457.98 960M896.59 217L467.62 960M906.24 217L477.27 960M915.88 217L486.91 960M925.53 217L496.56 960M935.17 217L506.20 960M944.82 217L515.85 960M954.46 217L525.49 960M964.11 217L535.14 960M973.75 217L544.78 960M983.40 217L554.43 960M993.04 217L564.07 960M1002.69 217L573.72 960M1012.33 217L583.36 960M1021.98 217L593.01 960M1031.62 217L602.65 960M1041.27 217L612.30 960M1050.91 217L621.94 960M1060.56 217L631.59 960M1070.20 217L641.23 960M1079.85 217L650.88 960M1089.49 217L660.52 960M1099.14 217L670.17 960M1108.78 217L679.81 960M1118.43 217L689.46 960M1128.07 217L699.10 960M1137.72 217L708.75 960M1147.36 217L718.39 960M1157.01 217L728.04 960M1166.65 217L737.68 960M1176.30 217L747.33 960M1185.94 217L756.97 960M1195.59 217L766.62 960M1205.23 217L776.26 960M1214.88 217L785.91 960M1224.52 217L795.55 960M1234.17 217L805.20 960M1243.81 217L814.84 960M1253.46 217L824.49 960M1263.10 217L834.13 960M1272.75 217L843.78 960M1282.39 217L853.42 960M1292.04 217L863.07 960M1301.68 217L872.71 960M1311.33 217L882.36 960M1320.97 217L892.00 960M1330.62 217L901.65 960M1340.26 217L911.29 960M1349.91 217L920.94 960M1359.55 217L930.58 960M1369.20 217L940.23 960M1378.84 217L949.87 960M1388.49 217L959.52 960M1398.13 217L969.16 960M1407.78 217L978.81 960M1417.42 217L988.45 960M1427.07 217L998.10 960M1436.71 217L1007.74 960M1446.36 217L1017.39 960M1456.00 217L1027.03 960M1465.65 217L1036.68 960M1475.29 217L1046.32 960M1484.94 217L1055.97 960M1494.58 217L1065.61 960M1504.23 217L1075.26 960M1513.87 217L1084.90 960M1523.52 217L1094.55 960M1533.16 217L1104.19 960M1542.81 217L1113.84 960M1552.45 217L1123.48 960M1562.10 217L1133.13 960M1571.74 217L1142.77 960M1581.39 217L1152.42 960M1591.03 217L1162.06 960M1600.68 217L1171.71 960M1610.32 217L1181.35 960M1619.97 217L1191.00 960M1629.61 217L1200.64 960M1639.26 217L1210.29 960M1648.90 217L1219.93 960M1658.55 217L1229.58 960M1668.19 217L1239.22 960M1677.84 217L1248.87 960M1687.48 217L1258.51 960M1697.13 217L1268.16 960M1706.77 217L1277.80 960M1716.42 217L1287.45 960M1726.06 217L1297.09 960M1735.71 217L1306.74 960M1745.35 217L1316.38 960M1755.00 217L1326.03 960M1764.64 217L1335.67 960M1774.29 217L1345.32 960M1783.93 217L1354.96 960M1793.58 217L1364.61 960M1803.22 217L1374.25 960M1812.87 217L1383.90 960M1822.51 217L1393.54 960M1832.16 217L1403.19 960M1841.80 217L1412.83 960M1851.45 217L1422.48 960M1861.09 217L1432.12 960M1870.74 217L1441.77 960M1880.38 217L1451.41 960M1890.03 217L1461.06 960M1899.67 217L1470.70 960M1909.32 217L1480.35 960M1918.96 217L1489.99 960M1928.61 217L1499.64 960M1938.25 217L1509.28 960M1947.90 217L1518.93 960M1957.54 217L1528.57 960M1967.19 217L1538.22 960M1976.83 217L1547.86 960M1986.48 217L1557.51 960" stroke="#a2cf87"/>
<path d="M600 211.92H1560M600 220.27H1560M600 228.62H1560M600 236.98H1560M600 245.33H1560M600 253.68H1560M600 262.04H1560M600 270.39H1560M600 278.74H1560M600 287.09H1560M600 295.45H1560M600 303.80H1560M600 312.15H1560M600 320.51H1560M600 328.86H1560M600 337.21H1560M600 345.56H1560M600 353.92H1560M600 362.27H1560M600 370.62H1560M600 378.98H1560M600 387.33H1560M600 395.68H1560M600 404.03H1560M600 412.39H1560M600 420.74H1560M600 429.09H1560M600 437.45H1560M600 445.80H1560M600 454.15H1560M600 462.50H1560M600 470.86H1560M600 479.21H1560M600 487.56H1560M600 495.91H1560M600 504.27H1560M600 512.62H1560M600 520.97H1560M600 529.33H1560M600 537.68H1560M600 546.03H1560M600 554.38H1560M600 562.74H1560M600 571.09H1560M600 579.44H1560M600 587.80H1560M600 596.15H1560M600 604.50H1560M600 612.85H1560M600 621.21H1560M600 629.56H1560M600 637.91H1560M600 646.27H1560M600 654.62H1560M600 662.97H1560M600 671.32H1560M600 679.68H1560M600 688.03H1560M600 696.38H1560M600 704.74H1560M600 713.09H1560M600 721.44H1560M600 729.79H1560M600 738.15H1560M600 746.50H1560M600 754.85H1560M600 763.20H1560M600 771.56H1560M600 779.91H1560M600 788.26H1560M600 796.62H1560M600 804.97H1560M600 813.32H1560M600 821.67H1560M600 830.03H1560M600 838.38H1560M600 846.73H1560M600 855.09H1560M600 863.44H1560M600 871.79H1560M600 880.14H1560M600 888.50H1560M600 896.85H1560M600 905.20H1560M600 913.56H1560M600 921.91H1560M600 930.26H1560M600 938.61H1560M600 946.97H1560M600 955.32H1560M600 963.67H1560M179.09 217L608.06 960M188.73 217L617.70 960M198.38 217L627.35 960M208.02 217L636.99 960M217.67 217L646.64 960M227.31 217L656.28 960M236.96 217L665.93 960M246.60 217L675.57 960M256.25 217L685.22 960M265.89 217L694.86 960M275.54 217L704.51 960M285.18 217L714.15 960M294.83 217L723.80 960M304.47 217L733.44 960M314.12 217L743.09 960M323.76 217L752.73 960M333.41 217L762.38 960M343.05 217L772.02 960M352.70 217L781.67 960M362.34 217L791.31 960M371.99 217L800.96 960M381.63 217L810.60 960M391.28 217L820.25 960M400.92 217L829.89 960M410.57 217L839.54 960M420.21 217L849.18 960M429.86 217L858.83 960M439.50 217L868.47 960M449.15 217L878.12 960M458.79 217L887.76 960M468.44 217L897.41 960M478.08 217L907.05 960M487.73 217L916.70 960M497.37 217L926.34 960M507.02 217L935.99 960M516.66 217L945.63 960M526.31 217L955.28 960M535.95 217L964.92 960M545.60 217L974.57 960M555.24 217L984.21 960M564.89 217L993.86 960M574.53 217L1003.50 960M584.18 217L1013.15 960M593.82 217L1022.79 960M603.47 217L1032.44 960M613.11 217L1042.08 960M622.76 217L1051.73 960M632.40 217L1061.37 960M642.05 217L1071.02 960M651.69 217L1080.66 960M661.34 217L1090.31 960M670.98 217L1099.95 960M680.63 217L1109.60 960M690.27 217L1119.24 960M699.92 217L1128.89 960M709.56 217L1138.53 960M719.21 217L1148.18 960M728.85 217L1157.82 960M738.50 217L1167.47 960M748.14 217L1177.11 960M757.79 217L1186.76 960M767.43 217L1196.40 960M777.08 217L1206.05 960M786.72 217L1215.69 960M796.37 217L1225.34 960M806.01 217L1234.98 960M815.66 217L1244.63 960M825.30 217L1254.27 960M834.95 217L1263.92 960M844.59 217L1273.56 960M854.24 217L1283.21 960M863.88 217L1292.85 960M873.53 217L1302.50 960M883.17 217L1312.14 960M892.82 217L1321.79 960M902.46 217L1331.43 960M912.11 217L1341.08 960M921.75 217L1350.72 960M931.40 217L1360.37 960M941.04 217L1370.01 960M950.69 217L1379.66 960M960.33 217L1389.30 960M969.98 217L1398.95 960M979.62 217L1408.59 960M989.27 217L1418.24 960M998.91 217L1427.88 960M1008.56 217L1437.53 960M1018.20 217L1447.17 960M1027.85 217L1456.82 960M1037.49 217L1466.46 960M1047.14 217L1476.11 960M1056.78 217L1485.75 960M1066.43 217L1495.40 960M1076.07 217L1505.04 960M1085.72 217L1514.69 960M1095.36 217L1524.33 960M1105.01 217L1533.98 960M1114.65 217L1543.62 960M1124.30 217L1553.27 960M1133.94 217L1562.91 960M1143.59 217L1572.56 960M1153.23 217L1582.20 960M1162.88 217L1591.85 960M1172.52 217L1601.49 960M1182.17 217L1611.14 960M1191.81 217L1620.78 960M1201.46 217L1630.43 960M1211.10 217L1640.07 960M1220.75 217L1649.72 960M1230.39 217L1659.36 960M1240.04 217L1669.01 960M1249.68 217L1678.65 960M1259.33 217L1688.30 960M1268.97 217L1697.94 960M1278.62 217L1707.59 960M1288.26 217L1717.23 960M1297.91 217L1726.88 960M1307.55 217L1736.52 960M1317.20 217L1746.17 960M1326.84 217L1755.81 960M1336.49 217L1765.46 960M1346.13 217L1775.10 960M1355.78 217L1784.75 960M1365.42 217L1794.39 960M1375.07 217L1804.04 960M1384.71 217L1813.68 960M1394.36 217L1823.33 960M1404.00 217L1832.97 960M1413.65 217L1842.62 960M1423.29 217L1852.26 960M1432.94 217L1861.91 960M1442.58 217L1871.55 960M1452.23 217L1881.20 960M1461.87 217L1890.84 960M1471.52 217L1900.49 960M1481.16 217L1910.13 960M1490.81 217L1919.78 960M1500.45 217L1929.42 960M1510.10 217L1939.07 960M1519.74 217L1948.71 960M1529.39 217L1958.36 960M1539.03 217L1968.00 960M1548.68 217L1977.65 960M1558.32 217L1987.29 960M607.24 217L178.27 960M616.89 217L187.92 960M626.53 217L197.56 960M636.18 217L207.21 960M645.82 217L216.85 960M655.47 217L226.50 960M665.11 217L236.14 960M674.76 217L245.79 960M684.40 217L255.43 960M694.05 217L265.08 960M703.69 217L274.72 960M713.34 217L284.37 960M722.98 217L294.01 960M732.63 217L303.66 960M742.27 217L313.30 960M751.92 217L322.95 960M761.56 217L332.59 960M771.21 217L342.24 960M780.85 217L351.88 960M790.50 217L361.53 960M800.14 217L371.17 960M809.79 217L380.82 960M819.43 217L390.46 960M829.08 217L400.11 960M838.72 217L409.75 960M848.37 217L419.40 960M858.01 217L429.04 960M867.66 217L438.69 960M877.30 217L448.33 960M886.95 217L457.98 960M896.59 217L467.62 960M906.24 217L477.27 960M915.88 217L486.91 960M925.53 217L496.56 960M935.17 217L506.20 960M944.82 217L515.85 960M954.46 217L525.49 960M964.11 217L535.14 960M973.75 217L544.78 960M983.40 217L554.43 960M993.04 217L564.07 960M1002.69 217L573.72 960M1012.33 217L583.36 960M1021.98 217L593.01 960M1031.62 217L602.65 960M1041.27 217L612.30 960M1050.91 217L621.94 960M1060.56 217L631.59 960M1070.20 217L641.23 960M1079.85 217L650.88 960M1089.49 217L660.52 960M1099.14 217L670.17 960M1108.78 217L679.81 960M1118.43 217L689.46 960M1128.07 217L699.10 960M1137.72 217L708.75 960M1147.36 217L718.39 960M1157.01 217L728.04 960M1166.65 217L737.68 960M1176.30 217L747.33 960M1185.94 217L756.97 960M1195.59 217L766.62 960M1205.23 217L776.26 960M1214.88 217L785.91 960M1224.52 217L795.55 960M1234.17 217L805.20 960M1243.81 217L814.84 960M1253.46 217L824.49 960M1263.10 217L834.13 960M1272.75 217L843.78 960M1282.39 217L853.42 960M1292.04 217L863.07 960M1301.68 217L872.71 960M1311.33 217L882.36 960M1320.97 217L892.00 960M1330.62 217L901.65 960M1340.26 217L911.29 960M1349.91 217L920.94 960M1359.55 217L930.58 960M1369.20 217L940.23 960M1378.84 217L949.87 960M1388.49 217L959.52 960M1398.13 217L969.16 960M1407.78 217L978.81 960M1417.42 217L988.45 960M1427.07 217L998.10 960M1436.71 217L1007.74 960M1446.36 217L1017.39 960M1456.00 217L1027.03 960M1465.65 217L1036.68 960M1475.29 217L1046.32 960M1484.94 217L1055.97 960M1494.58 217L1065.61 960M1504.23 217L1075.26 960M1513.87 217L1084.90 960M1523.52 217L1094.55 960M1533.16 217L1104.19 960M1542.81 217L1113.84 960M1552.45 217L1123.48 960M1562.10 217L1133.13 960M1571.74 217L1142.77 960M1581.39 217L1152.42 960M1591.03 217L1162.06 960M1600.68 217L1171.71 960M1610.32 217L1181.35 960M1619.97 217L1191.00 960M1629.61 217L1200.64 960M1639.26 217L1210.29 960M1648.90 217L1219.93 960M1658.55 217L1229.58 960M1668.19 217L1239.22 960M1677.84 217L1248.87 960M1687.48 217L1258.51 960M1697.13 217L1268.16 960M1706.77 217L1277.80 960M1716.42 217L1287.45 960M1726.06 217L1297.09 960M1735.71 217L1306.74 960M1745.35 217L1316.38 960M1755.00 217L1326.03 960M1764.64 217L1335.67 960M1774.29 217L1345.32 960M1783.93 217L1354.96 960M1793.58 217L1364.61 960M1803.22 217L1374.25 960M1812.87 217L1383.90 960M1822.51 217L1393.54 960M1832.16 217L1403.19 960M1841.80 217L1412.83 960M1851.45 217L1422.48 960M1861.09 217L1432.12 960M1870.74 217L1441.77 960M1880.38 217L1451.41 960M1890.03 217L1461.06 960M1899.67 217L1470.70 960M1909.32 217L1480.35 960M1918.96 217L1489.99 960M1928.61 217L1499.64 960M1938.25 217L1509.28 960M1947.90 217L1518.93 960M1957.54 217L1528.57 960M1967.19 217L1538.22 960M1976.83 217L1547.86 960M1986.48 217L1557.51 960" stroke="#82a88a" mask="url(#mdark)"/>
<path d="M600 211.92H1560M600 220.27H1560M600 228.62H1560M600 236.98H1560M600 245.33H1560M600 253.68H1560M600 262.04H1560M600 270.39H1560M600 278.74H1560M600 287.09H1560M600 295.45H1560M600 303.80H1560M600 312.15H1560M600 320.51H1560M600 328.86H1560M600 337.21H1560M600 345.56H1560M600 353.92H1560M600 362.27H1560M600 370.62H1560M600 378.98H1560M600 387.33H1560M600 395.68H1560M600 404.03H1560M600 412.39H1560M600 420.74H1560M600 429.09H1560M600 437.45H1560M600 445.80H1560M600 454.15H1560M600 462.50H1560M600 470.86H1560M600 479.21H1560M600 487.56H1560M600 495.91H1560M600 504.27H1560M600 512.62H1560M600 520.97H1560M600 529.33H1560M600 537.68H1560M600 546.03H1560M600 554.38H1560M600 562.74H1560M600 571.09H1560M600 579.44H1560M600 587.80H1560M600 596.15H1560M600 604.50H1560M600 612.85H1560M600 621.21H1560M600 629.56H1560M600 637.91H1560M600 646.27H1560M600 654.62H1560M600 662.97H1560M600 671.32H1560M600 679.68H1560M600 688.03H1560M600 696.38H1560M600 704.74H1560M600 713.09H1560M600 721.44H1560M600 729.79H1560M600 738.15H1560M600 746.50H1560M600 754.85H1560M600 763.20H1560M600 771.56H1560M600 779.91H1560M600 788.26H1560M600 796.62H1560M600 804.97H1560M600 813.32H1560M600 821.67H1560M600 830.03H1560M600 838.38H1560M600 846.73H1560M600 855.09H1560M600 863.44H1560M600 871.79H1560M600 880.14H1560M600 888.50H1560M600 896.85H1560M600 905.20H1560M600 913.56H1560M600 921.91H1560M600 930.26H1560M600 938.61H1560M600 946.97H1560M600 955.32H1560M600 963.67H1560M179.09 217L608.06 960M188.73 217L617.70 960M198.38 217L627.35 960M208.02 217L636.99 960M217.67 217L646.64 960M227.31 217L656.28 960M236.96 217L665.93 960M246.60 217L675.57 960M256.25 217L685.22 960M265.89 217L694.86 960M275.54 217L704.51 960M285.18 217L714.15 960M294.83 217L723.80 960M304.47 217L733.44 960M314.12 217L743.09 960M323.76 217L752.73 960M333.41 217L762.38 960M343.05 217L772.02 960M352.70 217L781.67 960M362.34 217L791.31 960M371.99 217L800.96 960M381.63 217L810.60 960M391.28 217L820.25 960M400.92 217L829.89 960M410.57 217L839.54 960M420.21 217L849.18 960M429.86 217L858.83 960M439.50 217L868.47 960M449.15 217L878.12 960M458.79 217L887.76 960M468.44 217L897.41 960M478.08 217L907.05 960M487.73 217L916.70 960M497.37 217L926.34 960M507.02 217L935.99 960M516.66 217L945.63 960M526.31 217L955.28 960M535.95 217L964.92 960M545.60 217L974.57 960M555.24 217L984.21 960M564.89 217L993.86 960M574.53 217L1003.50 960M584.18 217L1013.15 960M593.82 217L1022.79 960M603.47 217L1032.44 960M613.11 217L1042.08 960M622.76 217L1051.73 960M632.40 217L1061.37 960M642.05 217L1071.02 960M651.69 217L1080.66 960M661.34 217L1090.31 960M670.98 217L1099.95 960M680.63 217L1109.60 960M690.27 217L1119.24 960M699.92 217L1128.89 960M709.56 217L1138.53 960M719.21 217L1148.18 960M728.85 217L1157.82 960M738.50 217L1167.47 960M748.14 217L1177.11 960M757.79 217L1186.76 960M767.43 217L1196.40 960M777.08 217L1206.05 960M786.72 217L1215.69 960M796.37 217L1225.34 960M806.01 217L1234.98 960M815.66 217L1244.63 960M825.30 217L1254.27 960M834.95 217L1263.92 960M844.59 217L1273.56 960M854.24 217L1283.21 960M863.88 217L1292.85 960M873.53 217L1302.50 960M883.17 217L1312.14 960M892.82 217L1321.79 960M902.46 217L1331.43 960M912.11 217L1341.08 960M921.75 217L1350.72 960M931.40 217L1360.37 960M941.04 217L1370.01 960M950.69 217L1379.66 960M960.33 217L1389.30 960M969.98 217L1398.95 960M979.62 217L1408.59 960M989.27 217L1418.24 960M998.91 217L1427.88 960M1008.56 217L1437.53 960M1018.20 217L1447.17 960M1027.85 217L1456.82 960M1037.49 217L1466.46 960M1047.14 217L1476.11 960M1056.78 217L1485.75 960M1066.43 217L1495.40 960M1076.07 217L1505.04 960M1085.72 217L1514.69 960M1095.36 217L1524.33 960M1105.01 217L1533.98 960M1114.65 217L1543.62 960M1124.30 217L1553.27 960M1133.94 217L1562.91 960M1143.59 217L1572.56 960M1153.23 217L1582.20 960M1162.88 217L1591.85 960M1172.52 217L1601.49 960M1182.17 217L1611.14 960M1191.81 217L1620.78 960M1201.46 217L1630.43 960M1211.10 217L1640.07 960M1220.75 217L1649.72 960M1230.39 217L1659.36 960M1240.04 217L1669.01 960M1249.68 217L1678.65 960M1259.33 217L1688.30 960M1268.97 217L1697.94 960M1278.62 217L1707.59 960M1288.26 217L1717.23 960M1297.91 217L1726.88 960M1307.55 217L1736.52 960M1317.20 217L1746.17 960M1326.84 217L1755.81 960M1336.49 217L1765.46 960M1346.13 217L1775.10 960M1355.78 217L1784.75 960M1365.42 217L1794.39 960M1375.07 217L1804.04 960M1384.71 217L1813.68 960M1394.36 217L1823.33 960M1404.00 217L1832.97 960M1413.65 217L1842.62 960M1423.29 217L1852.26 960M1432.94 217L1861.91 960M1442.58 217L1871.55 960M1452.23 217L1881.20 960M1461.87 217L1890.84 960M1471.52 217L1900.49 960M1481.16 217L1910.13 960M1490.81 217L1919.78 960M1500.45 217L1929.42 960M1510.10 217L1939.07 960M1519.74 217L1948.71 960M1529.39 217L1958.36 960M1539.03 217L1968.00 960M1548.68 217L1977.65 960M1558.32 217L1987.29 960M607.24 217L178.27 960M616.89 217L187.92 960M626.53 217L197.56 960M636.18 217L207.21 960M645.82 217L216.85 960M655.47 217L226.50 960M665.11 217L236.14 960M674.76 217L245.79 960M684.40 217L255.43 960M694.05 217L265.08 960M703.69 217L274.72 960M713.34 217L284.37 960M722.98 217L294.01 960M732.63 217L303.66 960M742.27 217L313.30 960M751.92 217L322.95 960M761.56 217L332.59 960M771.21 217L342.24 960M780.85 217L351.88 960M790.50 217L361.53 960M800.14 217L371.17 960M809.79 217L380.82 960M819.43 217L390.46 960M829.08 217L400.11 960M838.72 217L409.75 960M848.37 217L419.40 960M858.01 217L429.04 960M867.66 217L438.69 960M877.30 217L448.33 960M886.95 217L457.98 960M896.59 217L467.62 960M906.24 217L477.27 960M915.88 217L486.91 960M925.53 217L496.56 960M935.17 217L506.20 960M944.82 217L515.85 960M954.46 217L525.49 960M964.11 217L535.14 960M973.75 217L544.78 960M983.40 217L554.43 960M993.04 217L564.07 960M1002.69 217L573.72 960M1012.33 217L583.36 960M1021.98 217L593.01 960M1031.62 217L602.65 960M1041.27 217L612.30 960M1050.91 217L621.94 960M1060.56 217L631.59 960M1070.20 217L641.23 960M1079.85 217L650.88 960M1089.49 217L660.52 960M1099.14 217L670.17 960M1108.78 217L679.81 960M1118.43 217L689.46 960M1128.07 217L699.10 960M1137.72 217L708.75 960M1147.36 217L718.39 960M1157.01 217L728.04 960M1166.65 217L737.68 960M1176.30 217L747.33 960M1185.94 217L756.97 960M1195.59 217L766.62 960M1205.23 217L776.26 960M1214.88 217L785.91 960M1224.52 217L795.55 960M1234.17 217L805.20 960M1243.81 217L814.84 960M1253.46 217L824.49 960M1263.10 217L834.13 960M1272.75 217L843.78 960M1282.39 217L853.42 960M1292.04 217L863.07 960M1301.68 217L872.71 960M1311.33 217L882.36 960M1320.97 217L892.00 960M1330.62 217L901.65 960M1340.26 217L911.29 960M1349.91 217L920.94 960M1359.55 217L930.58 960M1369.20 217L940.23 960M1378.84 217L949.87 960M1388.49 217L959.52 960M1398.13 217L969.16 960M1407.78 217L978.81 960M1417.42 217L988.45 960M1427.07 217L998.10 960M1436.71 217L1007.74 960M1446.36 217L1017.39 960M1456.00 217L1027.03 960M1465.65 217L1036.68 960M1475.29 217L1046.32 960M1484.94 217L1055.97 960M1494.58 217L1065.61 960M1504.23 217L1075.26 960M1513.87 217L1084.90 960M1523.52 217L1094.55 960M1533.16 217L1104.19 960M1542.81 217L1113.84 960M1552.45 217L1123.48 960M1562.10 217L1133.13 960M1571.74 217L1142.77 960M1581.39 217L1152.42 960M1591.03 217L1162.06 960M1600.68 217L1171.71 960M1610.32 217L1181.35 960M1619.97 217L1191.00 960M1629.61 217L1200.64 960M1639.26 217L1210.29 960M1648.90 217L1219.93 960M1658.55 217L1229.58 960M1668.19 217L1239.22 960M1677.84 217L1248.87 960M1687.48 217L1258.51 960M1697.13 217L1268.16 960M1706.77 217L1277.80 960M1716.42 217L1287.45 960M1726.06 217L1297.09 960M1735.71 217L1306.74 960M1745.35 217L1316.38 960M1755.00 217L1326.03 960M1764.64 217L1335.67 960M1774.29 217L1345.32 960M1783.93 217L1354.96 960M1793.58 217L1364.61 960M1803.22 217L1374.25 960M1812.87 217L1383.90 960M1822.51 217L1393.54 960M1832.16 217L1403.19 960M1841.80 217L1412.83 960M1851.45 217L1422.48 960M1861.09 217L1432.12 960M1870.74 217L1441.77 960M1880.38 217L1451.41 960M1890.03 217L1461.06 960M1899.67 217L1470.70 960M1909.32 217L1480.35 960M1918.96 217L1489.99 960M1928.61 217L1499.64 960M1938.25 217L1509.28 960M1947.90 217L1518.93 960M1957.54 217L1528.57 960M1967.19 217L1538.22 960M1976.83 217L1547.86 960M1986.48 217L1557.51 960" stroke="#f2dc7a" mask="url(#myel)"/>
<path d="M600 211.92H1560M600 220.27H1560M600 228.62H1560M600 236.98H1560M600 245.33H1560M600 253.68H1560M600 262.04H1560M600 270.39H1560M600 278.74H1560M600 287.09H1560M600 295.45H1560M600 303.80H1560M600 312.15H1560M600 320.51H1560M600 328.86H1560M600 337.21H1560M600 345.56H1560M600 353.92H1560M600 362.27H1560M600 370.62H1560M600 378.98H1560M600 387.33H1560M600 395.68H1560M600 404.03H1560M600 412.39H1560M600 420.74H1560M600 429.09H1560M600 437.45H1560M600 445.80H1560M600 454.15H1560M600 462.50H1560M600 470.86H1560M600 479.21H1560M600 487.56H1560M600 495.91H1560M600 504.27H1560M600 512.62H1560M600 520.97H1560M600 529.33H1560M600 537.68H1560M600 546.03H1560M600 554.38H1560M600 562.74H1560M600 571.09H1560M600 579.44H1560M600 587.80H1560M600 596.15H1560M600 604.50H1560M600 612.85H1560M600 621.21H1560M600 629.56H1560M600 637.91H1560M600 646.27H1560M600 654.62H1560M600 662.97H1560M600 671.32H1560M600 679.68H1560M600 688.03H1560M600 696.38H1560M600 704.74H1560M600 713.09H1560M600 721.44H1560M600 729.79H1560M600 738.15H1560M600 746.50H1560M600 754.85H1560M600 763.20H1560M600 771.56H1560M600 779.91H1560M600 788.26H1560M600 796.62H1560M600 804.97H1560M600 813.32H1560M600 821.67H1560M600 830.03H1560M600 838.38H1560M600 846.73H1560M600 855.09H1560M600 863.44H1560M600 871.79H1560M600 880.14H1560M600 888.50H1560M600 896.85H1560M600 905.20H1560M600 913.56H1560M600 921.91H1560M600 930.26H1560M600 938.61H1560M600 946.97H1560M600 955.32H1560M600 963.67H1560M179.09 217L608.06 960M188.73 217L617.70 960M198.38 217L627.35 960M208.02 217L636.99 960M217.67 217L646.64 960M227.31 217L656.28 960M236.96 217L665.93 960M246.60 217L675.57 960M256.25 217L685.22 960M265.89 217L694.86 960M275.54 217L704.51 960M285.18 217L714.15 960M294.83 217L723.80 960M304.47 217L733.44 960M314.12 217L743.09 960M323.76 217L752.73 960M333.41 217L762.38 960M343.05 217L772.02 960M352.70 217L781.67 960M362.34 217L791.31 960M371.99 217L800.96 960M381.63 217L810.60 960M391.28 217L820.25 960M400.92 217L829.89 960M410.57 217L839.54 960M420.21 217L849.18 960M429.86 217L858.83 960M439.50 217L868.47 960M449.15 217L878.12 960M458.79 217L887.76 960M468.44 217L897.41 960M478.08 217L907.05 960M487.73 217L916.70 960M497.37 217L926.34 960M507.02 217L935.99 960M516.66 217L945.63 960M526.31 217L955.28 960M535.95 217L964.92 960M545.60 217L974.57 960M555.24 217L984.21 960M564.89 217L993.86 960M574.53 217L1003.50 960M584.18 217L1013.15 960M593.82 217L1022.79 960M603.47 217L1032.44 960M613.11 217L1042.08 960M622.76 217L1051.73 960M632.40 217L1061.37 960M642.05 217L1071.02 960M651.69 217L1080.66 960M661.34 217L1090.31 960M670.98 217L1099.95 960M680.63 217L1109.60 960M690.27 217L1119.24 960M699.92 217L1128.89 960M709.56 217L1138.53 960M719.21 217L1148.18 960M728.85 217L1157.82 960M738.50 217L1167.47 960M748.14 217L1177.11 960M757.79 217L1186.76 960M767.43 217L1196.40 960M777.08 217L1206.05 960M786.72 217L1215.69 960M796.37 217L1225.34 960M806.01 217L1234.98 960M815.66 217L1244.63 960M825.30 217L1254.27 960M834.95 217L1263.92 960M844.59 217L1273.56 960M854.24 217L1283.21 960M863.88 217L1292.85 960M873.53 217L1302.50 960M883.17 217L1312.14 960M892.82 217L1321.79 960M902.46 217L1331.43 960M912.11 217L1341.08 960M921.75 217L1350.72 960M931.40 217L1360.37 960M941.04 217L1370.01 960M950.69 217L1379.66 960M960.33 217L1389.30 960M969.98 217L1398.95 960M979.62 217L1408.59 960M989.27 217L1418.24 960M998.91 217L1427.88 960M1008.56 217L1437.53 960M1018.20 217L1447.17 960M1027.85 217L1456.82 960M1037.49 217L1466.46 960M1047.14 217L1476.11 960M1056.78 217L1485.75 960M1066.43 217L1495.40 960M1076.07 217L1505.04 960M1085.72 217L1514.69 960M1095.36 217L1524.33 960M1105.01 217L1533.98 960M1114.65 217L1543.62 960M1124.30 217L1553.27 960M1133.94 217L1562.91 960M1143.59 217L1572.56 960M1153.23 217L1582.20 960M1162.88 217L1591.85 960M1172.52 217L1601.49 960M1182.17 217L1611.14 960M1191.81 217L1620.78 960M1201.46 217L1630.43 960M1211.10 217L1640.07 960M1220.75 217L1649.72 960M1230.39 217L1659.36 960M1240.04 217L1669.01 960M1249.68 217L1678.65 960M1259.33 217L1688.30 960M1268.97 217L1697.94 960M1278.62 217L1707.59 960M1288.26 217L1717.23 960M1297.91 217L1726.88 960M1307.55 217L1736.52 960M1317.20 217L1746.17 960M1326.84 217L1755.81 960M1336.49 217L1765.46 960M1346.13 217L1775.10 960M1355.78 217L1784.75 960M1365.42 217L1794.39 960M1375.07 217L1804.04 960M1384.71 217L1813.68 960M1394.36 217L1823.33 960M1404.00 217L1832.97 960M1413.65 217L1842.62 960M1423.29 217L1852.26 960M1432.94 217L1861.91 960M1442.58 217L1871.55 960M1452.23 217L1881.20 960M1461.87 217L1890.84 960M1471.52 217L1900.49 960M1481.16 217L1910.13 960M1490.81 217L1919.78 960M1500.45 217L1929.42 960M1510.10 217L1939.07 960M1519.74 217L1948.71 960M1529.39 217L1958.36 960M1539.03 217L1968.00 960M1548.68 217L1977.65 960M1558.32 217L1987.29 960M607.24 217L178.27 960M616.89 217L187.92 960M626.53 217L197.56 960M636.18 217L207.21 960M645.82 217L216.85 960M655.47 217L226.50 960M665.11 217L236.14 960M674.76 217L245.79 960M684.40 217L255.43 960M694.05 217L265.08 960M703.69 217L274.72 960M713.34 217L284.37 960M722.98 217L294.01 960M732.63 217L303.66 960M742.27 217L313.30 960M751.92 217L322.95 960M761.56 217L332.59 960M771.21 217L342.24 960M780.85 217L351.88 960M790.50 217L361.53 960M800.14 217L371.17 960M809.79 217L380.82 960M819.43 217L390.46 960M829.08 217L400.11 960M838.72 217L409.75 960M848.37 217L419.40 960M858.01 217L429.04 960M867.66 217L438.69 960M877.30 217L448.33 960M886.95 217L457.98 960M896.59 217L467.62 960M906.24 217L477.27 960M915.88 217L486.91 960M925.53 217L496.56 960M935.17 217L506.20 960M944.82 217L515.85 960M954.46 217L525.49 960M964.11 217L535.14 960M973.75 217L544.78 960M983.40 217L554.43 960M993.04 217L564.07 960M1002.69 217L573.72 960M1012.33 217L583.36 960M1021.98 217L593.01 960M1031.62 217L602.65 960M1041.27 217L612.30 960M1050.91 217L621.94 960M1060.56 217L631.59 960M1070.20 217L641.23 960M1079.85 217L650.88 960M1089.49 217L660.52 960M1099.14 217L670.17 960M1108.78 217L679.81 960M1118.43 217L689.46 960M1128.07 217L699.10 960M1137.72 217L708.75 960M1147.36 217L718.39 960M1157.01 217L728.04 960M1166.65 217L737.68 960M1176.30 217L747.33 960M1185.94 217L756.97 960M1195.59 217L766.62 960M1205.23 217L776.26 960M1214.88 217L785.91 960M1224.52 217L795.55 960M1234.17 217L805.20 960M1243.81 217L814.84 960M1253.46 217L824.49 960M1263.10 217L834.13 960M1272.75 217L843.78 960M1282.39 217L853.42 960M1292.04 217L863.07 960M1301.68 217L872.71 960M1311.33 217L882.36 960M1320.97 217L892.00 960M1330.62 217L901.65 960M1340.26 217L911.29 960M1349.91 217L920.94 960M1359.55 217L930.58 960M1369.20 217L940.23 960M1378.84 217L949.87 960M1388.49 217L959.52 960M1398.13 217L969.16 960M1407.78 217L978.81 960M1417.42 217L988.45 960M1427.07 217L998.10 960M1436.71 217L1007.74 960M1446.36 217L1017.39 960M1456.00 217L1027.03 960M1465.65 217L1036.68 960M1475.29 217L1046.32 960M1484.94 217L1055.97 960M1494.58 217L1065.61 960M1504.23 217L1075.26 960M1513.87 217L1084.90 960M1523.52 217L1094.55 960M1533.16 217L1104.19 960M1542.81 217L1113.84 960M1552.45 217L1123.48 960M1562.10 217L1133.13 960M1571.74 217L1142.77 960M1581.39 217L1152.42 960M1591.03 217L1162.06 960M1600.68 217L1171.71 960M1610.32 217L1181.35 960M1619.97 217L1191.00 960M1629.61 217L1200.64 960M1639.26 217L1210.29 960M1648.90 217L1219.93 960M1658.55 217L1229.58 960M1668.19 217L1239.22 960M1677.84 217L1248.87 960M1687.48 217L1258.51 960M1697.13 217L1268.16 960M1706.77 217L1277.80 960M1716.42 217L1287.45 960M1726.06 217L1297.09 960M1735.71 217L1306.74 960M1745.35 217L1316.38 960M1755.00 217L1326.03 960M1764.64 217L1335.67 960M1774.29 217L1345.32 960M1783.93 217L1354.96 960M1793.58 217L1364.61 960M1803.22 217L1374.25 960M1812.87 217L1383.90 960M1822.51 217L1393.54 960M1832.16 217L1403.19 960M1841.80 217L1412.83 960M1851.45 217L1422.48 960M1861.09 217L1432.12 960M1870.74 217L1441.77 960M1880.38 217L1451.41 960M1890.03 217L1461.06 960M1899.67 217L1470.70 960M1909.32 217L1480.35 960M1918.96 217L1489.99 960M1928.61 217L1499.64 960M1938.25 217L1509.28 960M1947.90 217L1518.93 960M1957.54 217L1528.57 960M1967.19 217L1538.22 960M1976.83 217L1547.86 960M1986.48 217L1557.51 960" stroke="#f59a9a" mask="url(#mband)"/>
</g>
<polyline points="953.2,975 678.5,200" stroke="#f38a1a" fill="none" stroke-width="1.05"/>
<polyline points="1234.6,200 1482,920 1370.1,975" stroke="#f38a1a" fill="none" stroke-width="1.05"/>
<path d="M841.7 646.3L851.3 646.3M841.7 646.3L846.5 654.6M851.3 646.3L860.9 646.3M860.9 646.3L870.6 646.3M870.6 646.3L875.4 654.6M846.5 654.6L851.3 663.0M875.4 654.6L880.2 663.0M885.1 654.6L894.7 654.6M880.2 663.0L885.1 654.6M894.7 654.6L904.3 654.6M904.3 654.6L914.0 654.6M914.0 654.6L918.8 663.0M851.3 663.0L856.1 671.3M918.8 663.0L928.5 663.0M928.5 663.0L938.1 663.0M938.1 663.0L942.9 671.3M856.1 671.3L860.9 679.7M860.9 679.7L870.6 679.7M870.6 679.7L880.2 679.7M880.2 679.7L889.9 679.7M942.9 671.3L952.6 671.3M952.6 671.3L962.2 671.3M962.2 671.3L967.0 679.7M889.9 679.7L894.7 688.0M967.0 679.7L976.7 679.7M976.7 679.7L986.3 679.7M986.3 679.7L996.0 679.7M996.0 679.7L1000.8 688.0M894.7 688.0L899.5 696.4M899.5 696.4L909.2 696.4M909.2 696.4L918.8 696.4M918.8 696.4L928.5 696.4M928.5 696.4L938.1 696.4M938.1 696.4L947.8 696.4M947.8 696.4L957.4 696.4M1000.8 688.0L1010.4 688.0M1010.4 688.0L1015.3 696.4M957.4 696.4L962.2 704.7M1015.3 696.4L1020.1 704.7M962.2 704.7L967.0 713.1M1020.1 704.7L1024.9 713.1M967.0 713.1L971.9 721.4M971.9 721.4L981.5 721.4M981.5 721.4L991.2 721.4M991.2 721.4L1000.8 721.4M1000.8 721.4L1010.4 721.4M1010.4 721.4L1020.1 721.4M1020.1 721.4L1029.7 721.4M1024.9 713.1L1029.7 721.4M875.4 688.0L880.2 679.7M875.4 688.0L885.1 688.0M880.2 679.7L885.1 688.0M856.1 688.0L865.8 688.0M860.9 696.4L865.8 688.0M856.1 688.0L860.9 696.4M986.3 696.4L996.0 696.4M991.2 704.7L996.0 696.4M986.3 696.4L991.2 704.7M875.4 704.7L885.1 704.7M880.2 713.1L885.1 704.7M875.4 704.7L880.2 713.1M1005.6 729.8L1010.4 721.4M1005.6 729.8L1015.3 729.8M1010.4 721.4L1015.3 729.8M1020.1 738.1L1024.9 729.8M1020.1 738.1L1029.7 738.1M1024.9 729.8L1029.7 738.1M1044.2 746.5L1049.0 738.1M1044.2 746.5L1053.8 746.5M1049.0 738.1L1053.8 746.5M871 679.7H995M898 688.0H1010M957 704.7H1018M975 713.1H1025" stroke="#ee2a4a" stroke-width="1.6" fill="none" clip-path="url(#pg2)"/>
<g fill="none" stroke-width="1.35" stroke-linejoin="round" stroke-linecap="round">
<path d="M640 210 L649.2 214 L658.3 218 L667.4 222 L676.5 226 L685.5 230 L694.5 234 L703.6 238 L712.6 242 L721.6 246 L730.6 250 L739.6 254 L748.6 258 L757.6 262 L766.7 266 L775.7 270 L784.8 274 L794 278 L803.1 282 L812.4 286 L821.6 290 L830.9 294 L840.3 298 L849.7 302 L859.2 306 L868.7 310 L878.3 314 L888 318 L897.6 322 L907.2 326 L916.7 330 L926.2 334 L935.5 338 L944.7 342 L953.8 346 L962.6 350 L971.2 354 L979.6 358 L987.7 362 L995.6 366 L1003.1 370 L1010.3 374 L1017.2 378 L1023.9 382 L1030.4 386 L1036.8 390 L1043.1 394 L1049.3 398 L1055.5 402 L1061.6 406 L1067.6 410 L1073.6 414 L1079.6 418 L1085.4 422 L1091.2 426 L1096.9 430 L1102.5 434 L1108 438 L1113.4 442 L1118.7 446 L1124 450 L1129.1 454 L1134.2 458 L1139.2 462 L1144.1 466 L1148.8 470 L1153.5 474 L1158.2 478 L1162.7 482 L1167.1 486 L1171.4 490 L1175.7 494 L1179.8 498 L1183.9 502 L1187.9 506 L1191.7 510 L1195.5 514 L1199.2 518 L1202.8 522 L1206.3 526 L1209.7 530 L1213 534 L1216.3 538 L1219.4 542 L1222.5 546 L1225.4 550 L1228.3 554 L1231 558 L1233.7 562 L1236.3 566 L1238.9 570 L1241.3 574 L1243.7 578 L1246 582 L1248.3 586 L1250.5 590 L1252.6 594 L1254.7 598 L1256.8 602 L1258.8 606 L1260.8 610 L1262.7 614 L1264.6 618 L1266.4 622 L1268.2 626 L1270 630 L1271.8 634 L1273.5 638 L1275.1 642 L1276.8 646 L1278.4 650 L1280 654 L1281.5 658 L1283.1 662 L1284.6 666 L1286 670 L1287.5 674 L1288.9 678 L1290.3 682 L1291.6 686 L1293 690 L1294.3 694 L1295.6 698 L1296.9 702 L1298.2 706 L1299.4 710 L1300.6 714 L1301.8 718 L1303 722 L1304.2 726 L1305.4 730 L1306.5 734 L1307.7 738 L1308.8 742 L1309.9 746 L1311 750 L1312.1 754 L1313.2 758 L1314.3 762 L1315.3 766 L1316.4 770 L1317.5 774 L1318.5 778 L1319.6 782 L1320.6 786 L1321.7 790 L1322.7 794 L1323.8 798 L1324.8 802 L1325.9 806 L1326.9 810 L1328 814 L1329.1 818 L1330.1 822 L1331.2 826 L1332.3 830 L1333.4 834 L1334.5 838 L1335.6 842 L1336.7 846 L1337.8 850 L1338.9 854 L1340.1 858 L1341.2 862 L1342.3 866 L1343.5 870 L1344.6 874 L1345.7 878 L1346.9 882 L1348 886 L1349.1 890 L1350.3 894 L1351.4 898 L1352.5 902 L1353.6 906 L1354.7 910 L1355.7 914 L1356.8 918 L1357.9 922 L1358.9 926 L1359.9 930 L1360.9 934 L1361.9 938 L1362.9 942 L1363.8 946 L1364.8 950 L1365.7 954 L1366.6 958 L1367 960" stroke="#1e1e1e"/>
<path d="M686 210 L696.9 214 L707.8 218 L718.6 222 L729.3 226 L739.9 230 L750.4 234 L760.8 238 L771.2 242 L781.5 246 L791.6 250 L801.7 254 L811.7 258 L821.6 262 L831.4 266 L841.1 270 L850.7 274 L860.2 278 L869.6 282 L878.9 286 L888.1 290 L897.2 294 L906.2 298 L915.1 302 L923.9 306 L932.6 310 L941.2 314 L949.6 318 L958 322 L966.2 326 L974.3 330 L982.4 334 L990.3 338 L998.1 342 L1005.8 346 L1013.3 350 L1020.8 354 L1028.1 358 L1035.4 362 L1042.5 366 L1049.5 370 L1056.4 374 L1063.2 378 L1069.8 382 L1076.3 386 L1082.8 390 L1089.1 394 L1095.2 398 L1101.3 402 L1107.2 406 L1113.1 410 L1118.8 414 L1124.4 418 L1129.8 422 L1135.2 426 L1140.5 430 L1145.6 434 L1150.7 438 L1155.6 442 L1160.5 446 L1165.2 450 L1169.8 454 L1174.4 458 L1178.8 462 L1183.2 466 L1187.4 470 L1191.6 474 L1195.7 478 L1199.7 482 L1203.5 486 L1207.4 490 L1211.1 494 L1214.7 498 L1218.3 502 L1221.7 506 L1225.1 510 L1228.5 514 L1231.7 518 L1234.9 522 L1238 526 L1241 530 L1243.9 534 L1246.8 538 L1249.6 542 L1252.4 546 L1255.1 550 L1257.7 554 L1260.3 558 L1262.8 562 L1265.2 566 L1267.6 570 L1269.9 574 L1272.2 578 L1274.5 582 L1276.6 586 L1278.8 590 L1280.8 594 L1282.9 598 L1284.9 602 L1286.8 606 L1288.7 610 L1290.6 614 L1292.4 618 L1294.2 622 L1295.9 626 L1297.7 630 L1299.3 634 L1301 638 L1302.6 642 L1304.2 646 L1305.8 650 L1307.3 654 L1308.9 658 L1310.4 662 L1311.8 666 L1313.3 670 L1314.7 674 L1316.1 678 L1317.5 682 L1318.9 686 L1320.2 690 L1321.6 694 L1322.9 698 L1324.2 702 L1325.5 706 L1326.8 710 L1328 714 L1329.2 718 L1330.5 722 L1331.7 726 L1332.9 730 L1334 734 L1335.2 738 L1336.3 742 L1337.5 746 L1338.6 750 L1339.7 754 L1340.8 758 L1341.9 762 L1343 766 L1344.1 770 L1345.2 774 L1346.2 778 L1347.3 782 L1348.3 786 L1349.4 790 L1350.4 794 L1351.4 798 L1352.4 802 L1353.5 806 L1354.5 810 L1355.5 814 L1356.5 818 L1357.5 822 L1358.5 826 L1359.5 830 L1360.5 834 L1361.5 838 L1362.5 842 L1363.5 846 L1364.5 850 L1365.5 854 L1366.5 858 L1367.5 862 L1368.5 866 L1369.5 870 L1370.5 874 L1371.5 878 L1372.5 882 L1373.6 886 L1374.6 890 L1375.6 894 L1376.7 898 L1377.7 902 L1378.8 906 L1379.9 910 L1381 914 L1382 918 L1383.1 922 L1384.2 926 L1385.4 930 L1386.5 934 L1387.6 938 L1388.8 942 L1389.9 946 L1391.1 950 L1392.3 954 L1393.5 958 L1394.1 960" stroke="#1e1e1e"/>
<path d="M751.9 210 L763.1 214 L774.1 218 L785 222 L795.7 226 L806.3 230 L816.8 234 L827.1 238 L837.4 242 L847.4 246 L857.4 250 L867.2 254 L876.9 258 L886.5 262 L895.9 266 L905.3 270 L914.4 274 L923.5 278 L932.5 282 L941.3 286 L950 290 L958.5 294 L967 298 L975.3 302 L983.5 306 L991.6 310 L999.6 314 L1007.4 318 L1015.1 322 L1022.7 326 L1030.2 330 L1037.6 334 L1044.8 338 L1052 342 L1059 346 L1065.9 350 L1072.7 354 L1079.4 358 L1086 362 L1092.4 366 L1098.8 370 L1105 374 L1111.1 378 L1117.1 382 L1123.1 386 L1128.9 390 L1134.5 394 L1140.1 398 L1145.6 402 L1151 406 L1156.2 410 L1161.4 414 L1166.5 418 L1171.4 422 L1176.3 426 L1181.1 430 L1185.7 434 L1190.3 438 L1194.8 442 L1199.2 446 L1203.5 450 L1207.7 454 L1211.8 458 L1215.8 462 L1219.8 466 L1223.7 470 L1227.5 474 L1231.2 478 L1234.8 482 L1238.3 486 L1241.8 490 L1245.2 494 L1248.5 498 L1251.8 502 L1254.9 506 L1258 510 L1261.1 514 L1264 518 L1267 522 L1269.8 526 L1272.6 530 L1275.3 534 L1277.9 538 L1280.5 542 L1283.1 546 L1285.5 550 L1287.9 554 L1290.3 558 L1292.6 562 L1294.9 566 L1297.1 570 L1299.3 574 L1301.4 578 L1303.5 582 L1305.5 586 L1307.5 590 L1309.4 594 L1311.3 598 L1313.2 602 L1315 606 L1316.8 610 L1318.5 614 L1320.2 618 L1321.9 622 L1323.6 626 L1325.2 630 L1326.8 634 L1328.3 638 L1329.9 642 L1331.4 646 L1332.9 650 L1334.4 654 L1335.8 658 L1337.2 662 L1338.7 666 L1340.1 670 L1341.4 674 L1342.8 678 L1344.1 682 L1345.4 686 L1346.8 690 L1348 694 L1349.3 698 L1350.6 702 L1351.8 706 L1353.1 710 L1354.3 714 L1355.5 718 L1356.7 722 L1357.9 726 L1359 730 L1360.2 734 L1361.3 738 L1362.5 742 L1363.6 746 L1364.7 750 L1365.8 754 L1366.9 758 L1368 762 L1369.1 766 L1370.2 770 L1371.2 774 L1372.3 778 L1373.3 782 L1374.4 786 L1375.4 790 L1376.5 794 L1377.5 798 L1378.5 802 L1379.6 806 L1380.6 810 L1381.6 814 L1382.6 818 L1383.7 822 L1384.7 826 L1385.7 830 L1386.7 834 L1387.7 838 L1388.7 842 L1389.8 846 L1390.8 850 L1391.8 854 L1392.8 858 L1393.9 862 L1394.9 866 L1395.9 870 L1397 874 L1398 878 L1399 882 L1400.1 886 L1401.2 890 L1402.2 894 L1403.3 898 L1404.4 902 L1405.5 906 L1406.6 910 L1407.7 914 L1408.8 918 L1409.9 922 L1411 926 L1412.2 930 L1413.3 934 L1414.5 938 L1415.7 942 L1416.9 946 L1418.1 950 L1419.3 954 L1420.5 958 L1421.1 960" stroke="#1e1e1e"/>
<path d="M821 210 L831.8 214 L842.4 218 L852.9 222 L863.2 226 L873.4 230 L883.4 234 L893.3 238 L903 242 L912.6 246 L922.1 250 L931.4 254 L940.5 258 L949.6 262 L958.5 266 L967.2 270 L975.9 274 L984.3 278 L992.7 282 L1000.9 286 L1009 290 L1017 294 L1024.8 298 L1032.5 302 L1040.1 306 L1047.6 310 L1054.9 314 L1062.1 318 L1069.2 322 L1076.2 326 L1083.1 330 L1089.8 334 L1096.5 338 L1103 342 L1109.4 346 L1115.7 350 L1121.9 354 L1127.9 358 L1133.9 362 L1139.7 366 L1145.5 370 L1151.2 374 L1156.7 378 L1162.1 382 L1167.5 386 L1172.7 390 L1177.9 394 L1182.9 398 L1187.9 402 L1192.7 406 L1197.5 410 L1202.2 414 L1206.8 418 L1211.2 422 L1215.7 426 L1220 430 L1224.2 434 L1228.4 438 L1232.4 442 L1236.4 446 L1240.3 450 L1244.1 454 L1247.9 458 L1251.5 462 L1255.1 466 L1258.6 470 L1262.1 474 L1265.5 478 L1268.8 482 L1272 486 L1275.1 490 L1278.2 494 L1281.3 498 L1284.2 502 L1287.1 506 L1290 510 L1292.7 514 L1295.5 518 L1298.1 522 L1300.7 526 L1303.3 530 L1305.8 534 L1308.2 538 L1310.6 542 L1312.9 546 L1315.2 550 L1317.4 554 L1319.6 558 L1321.8 562 L1323.9 566 L1325.9 570 L1327.9 574 L1329.9 578 L1331.8 582 L1333.7 586 L1335.5 590 L1337.4 594 L1339.1 598 L1340.9 602 L1342.6 606 L1344.3 610 L1345.9 614 L1347.5 618 L1349.1 622 L1350.7 626 L1352.3 630 L1353.8 634 L1355.3 638 L1356.7 642 L1358.2 646 L1359.6 650 L1361 654 L1362.4 658 L1363.8 662 L1365.2 666 L1366.5 670 L1367.9 674 L1369.2 678 L1370.5 682 L1371.8 686 L1373.1 690 L1374.4 694 L1375.6 698 L1376.9 702 L1378.1 706 L1379.3 710 L1380.5 714 L1381.7 718 L1382.9 722 L1384.1 726 L1385.3 730 L1386.4 734 L1387.6 738 L1388.7 742 L1389.8 746 L1390.9 750 L1392.1 754 L1393.2 758 L1394.3 762 L1395.4 766 L1396.4 770 L1397.5 774 L1398.6 778 L1399.6 782 L1400.7 786 L1401.8 790 L1402.8 794 L1403.9 798 L1404.9 802 L1405.9 806 L1407 810 L1408 814 L1409 818 L1410 822 L1411.1 826 L1412.1 830 L1413.1 834 L1414.1 838 L1415.1 842 L1416.2 846 L1417.2 850 L1418.2 854 L1419.2 858 L1420.2 862 L1421.2 866 L1422.3 870 L1423.3 874 L1424.3 878 L1425.3 882 L1426.3 886 L1427.4 890 L1428.4 894 L1429.5 898 L1430.5 902 L1431.5 906 L1432.6 910 L1433.6 914 L1434.7 918 L1435.8 922 L1436.8 926 L1437.9 930 L1439 934 L1440.1 938 L1441.2 942 L1442.3 946 L1443.4 950 L1444.5 954 L1445.7 958 L1446.2 960" stroke="#f01d1d"/>
<path d="M890 210 L900 214 L909.8 218 L919.4 222 L929 226 L938.4 230 L947.6 234 L956.7 238 L965.7 242 L974.6 246 L983.3 250 L991.9 254 L1000.3 258 L1008.6 262 L1016.8 266 L1024.9 270 L1032.8 274 L1040.7 278 L1048.4 282 L1055.9 286 L1063.4 290 L1070.7 294 L1077.9 298 L1085 302 L1092 306 L1098.9 310 L1105.6 314 L1112.2 318 L1118.8 322 L1125.2 326 L1131.5 330 L1137.7 334 L1143.8 338 L1149.8 342 L1155.6 346 L1161.4 350 L1167.1 354 L1172.7 358 L1178.1 362 L1183.5 366 L1188.8 370 L1194 374 L1199.1 378 L1204.1 382 L1209 386 L1213.8 390 L1218.5 394 L1223.1 398 L1227.7 402 L1232.1 406 L1236.5 410 L1240.8 414 L1245 418 L1249.1 422 L1253.1 426 L1257.1 430 L1260.9 434 L1264.7 438 L1268.5 442 L1272.1 446 L1275.7 450 L1279.2 454 L1282.6 458 L1286 462 L1289.3 466 L1292.5 470 L1295.7 474 L1298.7 478 L1301.8 482 L1304.7 486 L1307.6 490 L1310.5 494 L1313.2 498 L1316 502 L1318.6 506 L1321.2 510 L1323.8 514 L1326.3 518 L1328.7 522 L1331.1 526 L1333.4 530 L1335.7 534 L1338 538 L1340.2 542 L1342.3 546 L1344.4 550 L1346.5 554 L1348.5 558 L1350.5 562 L1352.4 566 L1354.3 570 L1356.2 574 L1358 578 L1359.8 582 L1361.6 586 L1363.3 590 L1365 594 L1366.6 598 L1368.3 602 L1369.9 606 L1371.5 610 L1373 614 L1374.5 618 L1376 622 L1377.5 626 L1379 630 L1380.4 634 L1381.8 638 L1383.2 642 L1384.6 646 L1386 650 L1387.4 654 L1388.7 658 L1390 662 L1391.4 666 L1392.7 670 L1394 674 L1395.2 678 L1396.5 682 L1397.8 686 L1399 690 L1400.3 694 L1401.5 698 L1402.7 702 L1404 706 L1405.2 710 L1406.4 714 L1407.6 718 L1408.7 722 L1409.9 726 L1411.1 730 L1412.2 734 L1413.4 738 L1414.5 742 L1415.7 746 L1416.8 750 L1417.9 754 L1419 758 L1420.1 762 L1421.3 766 L1422.4 770 L1423.5 774 L1424.5 778 L1425.6 782 L1426.7 786 L1427.8 790 L1428.9 794 L1429.9 798 L1431 802 L1432.1 806 L1433.1 810 L1434.2 814 L1435.2 818 L1436.3 822 L1437.3 826 L1438.4 830 L1439.4 834 L1440.5 838 L1441.5 842 L1442.6 846 L1443.6 850 L1444.7 854 L1445.7 858 L1446.8 862 L1447.8 866 L1448.9 870 L1449.9 874 L1451 878 L1452 882 L1453.1 886 L1454.1 890 L1455.2 894 L1456.2 898 L1457.3 902 L1458.4 906 L1459.4 910 L1460.5 914 L1461.6 918 L1462.7 922 L1463.7 926 L1464.8 930 L1465.9 934 L1467 938 L1468.1 942 L1469.2 946 L1470.4 950 L1471.5 954 L1472.6 958 L1473.2 960" stroke="#1e1e1e"/>
<path d="M659.5 241.3 L666.8 245.3 L674.3 249.3 L681.9 253.3 L689.8 257.3 L697.8 261.3 L705.9 265.3 L714.2 269.3 L722.7 273.3 L731.2 277.3 L739.9 281.3 L748.7 285.3 L757.6 289.3 L766.5 293.3 L775.6 297.3 L784.7 301.3 L793.8 305.3 L803 309.3 L812.3 313.3 L821.5 317.3 L830.8 321.3 L840.1 325.3 L849.4 329.3 L858.7 333.3 L868 337.3 L877.2 341.3 L886.4 345.3 L895.6 349.3 L904.7 353.3 L913.7 357.3 L922.7 361.3 L931.5 365.3 L940.3 369.3 L949 373.3 L957.5 377.3 L965.9 381.3 L974.2 385.3 L982.3 389.3 L990.3 393.3 L998.1 397.3 L1005.8 401.3 L1013.3 405.3 L1020.6 409.3 L1027.7 413.3 L1034.7 417.3 L1041.5 421.3 L1048.2 425.3 L1054.7 429.3 L1061.1 433.3 L1067.4 437.3 L1073.5 441.3 L1079.4 445.3 L1085.2 449.3 L1090.9 453.3 L1096.5 457.3 L1101.9 461.3 L1107.2 465.3 L1112.4 469.3 L1117.4 473.3 L1122.3 477.3 L1127.1 481.3 L1131.8 485.3 L1136.4 489.3 L1140.9 493.3 L1145.2 497.3 L1149.4 501.3 L1153.6 505.3 L1157.6 509.3 L1161.6 513.3 L1165.4 517.3 L1169.1 521.3 L1172.8 525.3 L1176.3 529.3 L1179.8 533.3 L1183.2 537.3 L1186.5 541.3 L1189.7 545.3 L1192.8 549.3 L1195.9 553.3 L1198.9 557.3 L1201.8 561.3 L1204.6 565.3 L1207.4 569.3 L1210.1 573.3 L1212.7 577.3 L1215.3 581.3 L1217.8 585.3 L1220.2 589.3 L1222.6 593.3 L1224.9 597.3 L1227.2 601.3 L1229.4 605.3 L1231.5 609.3 L1233.7 613.3 L1235.7 617.3 L1237.7 621.3 L1239.7 625.3 L1241.6 629.3 L1243.5 633.3 L1245.3 637.3 L1247.1 641.3 L1248.9 645.3 L1250.6 649.3 L1252.3 653.3 L1254 657.3 L1255.6 661.3 L1257.2 665.3 L1258.8 669.3 L1260.4 673.3 L1261.9 677.3 L1263.4 681.3 L1264.9 685.3 L1266.3 689.3 L1267.7 693.3 L1269.1 697.3 L1270.5 701.3 L1271.9 705.3 L1273.2 709.3 L1274.5 713.3 L1275.8 717.3 L1277.1 721.3 L1278.3 725.3 L1279.6 729.3 L1280.8 733.3 L1282 737.3 L1283.2 741.3 L1284.3 745.3 L1285.5 749.3 L1286.6 753.3 L1287.7 757.3 L1288.8 761.3 L1289.9 765.3 L1291 769.3 L1292.1 773.3 L1293.1 777.3 L1294.2 781.3 L1295.2 785.3 L1296.3 789.3 L1297.3 793.3 L1298.3 797.3 L1299.3 801.3 L1300.3 805.3 L1301.3 809.3 L1302.3 813.3 L1303.3 817.3 L1304.3 821.3 L1305.3 825.3 L1306.3 829.3 L1307.2 833.3 L1308.2 837.3 L1309.2 841.3 L1310.2 845.3 L1311.1 849.3 L1312.1 853.3 L1313.1 857.3 L1314.1 861.3 L1315.1 865.3 L1316.1 869.3 L1317.1 873.3 L1318.1 877.3 L1319.1 881.3 L1320.1 885.3 L1321.1 889.3 L1322.1 893.3 L1323.2 897.3 L1324.2 901.3 L1325.3 905.3 L1326.3 909.3 L1327.4 913.3 L1328.5 917.3 L1329.6 921.3 L1330.7 925.3 L1331.9 929.3 L1333 933.3 L1334.2 937.3 L1335.3 941.3 L1336.5 945.3 L1337.7 949.3 L1339 953.3 L1340.2 957.3 L1341.1 960" stroke="#1e1e1e"/>
<path d="M675.1 274.6 L682.7 278.6 L690.5 282.6 L698.5 286.6 L706.6 290.6 L714.9 294.6 L723.3 298.6 L731.8 302.6 L740.4 306.6 L749.1 310.6 L757.9 314.6 L766.8 318.6 L775.7 322.6 L784.7 326.6 L793.8 330.6 L802.8 334.6 L811.9 338.6 L821.1 342.6 L830.2 346.6 L839.3 350.6 L848.4 354.6 L857.5 358.6 L866.6 362.6 L875.6 366.6 L884.6 370.6 L893.4 374.6 L902.3 378.6 L911 382.6 L919.6 386.6 L928.1 390.6 L936.5 394.6 L944.8 398.6 L953 402.6 L961 406.6 L968.9 410.6 L976.6 414.6 L984.3 418.6 L991.7 422.6 L999.1 426.6 L1006.3 430.6 L1013.4 434.6 L1020.3 438.6 L1027.1 442.6 L1033.8 446.6 L1040.4 450.6 L1046.8 454.6 L1053 458.6 L1059.2 462.6 L1065.2 466.6 L1071.1 470.6 L1076.8 474.6 L1082.4 478.6 L1087.8 482.6 L1093.2 486.6 L1098.3 490.6 L1103.4 494.6 L1108.3 498.6 L1113.2 502.6 L1117.8 506.6 L1122.4 510.6 L1126.9 514.6 L1131.2 518.6 L1135.4 522.6 L1139.5 526.6 L1143.6 530.6 L1147.5 534.6 L1151.2 538.6 L1154.9 542.6 L1158.5 546.6 L1162 550.6 L1165.4 554.6 L1168.7 558.6 L1172 562.6 L1175.1 566.6 L1178.1 570.6 L1181.1 574.6 L1184 578.6 L1186.8 582.6 L1189.5 586.6 L1192.2 590.6 L1194.7 594.6 L1197.2 598.6 L1199.7 602.6 L1202.1 606.6 L1204.4 610.6 L1206.6 614.6 L1208.8 618.6 L1211 622.6 L1213 626.6 L1215.1 630.6 L1217.1 634.6 L1219 638.6 L1220.9 642.6 L1222.7 646.6 L1224.5 650.6 L1226.3 654.6 L1228 658.6 L1229.7 662.6 L1231.4 666.6 L1233 670.6 L1234.6 674.6 L1236.2 678.6 L1237.7 682.6 L1239.2 686.6 L1240.7 690.6 L1242.2 694.6 L1243.6 698.6 L1245 702.6 L1246.4 706.6 L1247.7 710.6 L1249 714.6 L1250.3 718.6 L1251.6 722.6 L1252.8 726.6 L1254.1 730.6 L1255.3 734.6 L1256.5 738.6 L1257.7 742.6 L1258.8 746.6 L1259.9 750.6 L1261.1 754.6 L1262.2 758.6 L1263.3 762.6 L1264.3 766.6 L1265.4 770.6 L1266.4 774.6 L1267.5 778.6 L1268.5 782.6 L1269.5 786.6 L1270.5 790.6 L1271.5 794.6 L1272.5 798.6 L1273.5 802.6 L1274.4 806.6 L1275.4 810.6 L1276.4 814.6 L1277.3 818.6 L1278.3 822.6 L1279.2 826.6 L1280.1 830.6 L1281.1 834.6 L1282 838.6 L1283 842.6 L1283.9 846.6 L1284.9 850.6 L1285.8 854.6 L1286.8 858.6 L1287.7 862.6 L1288.7 866.6 L1289.6 870.6 L1290.6 874.6 L1291.6 878.6 L1292.6 882.6 L1293.5 886.6 L1294.5 890.6 L1295.6 894.6 L1296.6 898.6 L1297.6 902.6 L1298.7 906.6 L1299.7 910.6 L1300.8 914.6 L1301.9 918.6 L1303 922.6 L1304.1 926.6 L1305.2 930.6 L1306.4 934.6 L1307.5 938.6 L1308.7 942.6 L1309.9 946.6 L1311.1 950.6 L1312.4 954.6 L1313.7 958.6 L1314.1 960" stroke="#f01d1d"/>
<path d="M681.4 303.5 L690.4 307.5 L699.4 311.5 L708.4 315.5 L717.4 319.5 L726.3 323.5 L735.3 327.5 L744.3 331.5 L753.2 335.5 L762.1 339.5 L771 343.5 L779.8 347.5 L788.6 351.5 L797.4 355.5 L806.2 359.5 L814.9 363.5 L823.5 367.5 L832.1 371.5 L840.7 375.5 L849.2 379.5 L857.7 383.5 L866.1 387.5 L874.4 391.5 L882.7 395.5 L890.9 399.5 L899 403.5 L907.1 407.5 L915.1 411.5 L923 415.5 L930.8 419.5 L938.6 423.5 L946.2 427.5 L953.8 431.5 L961.3 435.5 L968.6 439.5 L975.9 443.5 L983.1 447.5 L990.1 451.5 L997.1 455.5 L1003.9 459.5 L1010.7 463.5 L1017.3 467.5 L1023.8 471.5 L1030.1 475.5 L1036.4 479.5 L1042.5 483.5 L1048.5 487.5 L1054.3 491.5 L1060 495.5 L1065.7 499.5 L1071.2 503.5 L1076.5 507.5 L1081.8 511.5 L1086.9 515.5 L1091.9 519.5 L1096.8 523.5 L1101.6 527.5 L1106.2 531.5 L1110.8 535.5 L1115.2 539.5 L1119.5 543.5 L1123.8 547.5 L1127.9 551.5 L1131.9 555.5 L1135.7 559.5 L1139.5 563.5 L1143.2 567.5 L1146.8 571.5 L1150.2 575.5 L1153.6 579.5 L1156.9 583.5 L1160 587.5 L1163.1 591.5 L1166.1 595.5 L1169 599.5 L1171.7 603.5 L1174.5 607.5 L1177.1 611.5 L1179.6 615.5 L1182.1 619.5 L1184.5 623.5 L1186.8 627.5 L1189 631.5 L1191.2 635.5 L1193.3 639.5 L1195.3 643.5 L1197.3 647.5 L1199.2 651.5 L1201.1 655.5 L1202.9 659.5 L1204.6 663.5 L1206.3 667.5 L1207.9 671.5 L1209.5 675.5 L1211.1 679.5 L1212.6 683.5 L1214.1 687.5 L1215.5 691.5 L1216.9 695.5 L1218.3 699.5 L1219.6 703.5 L1221 707.5 L1222.3 711.5 L1223.5 715.5 L1224.8 719.5 L1226 723.5 L1227.2 727.5 L1228.4 731.5 L1229.6 735.5 L1230.7 739.5 L1231.9 743.5 L1233 747.5 L1234.1 751.5 L1235.2 755.5 L1236.3 759.5 L1237.4 763.5 L1238.5 767.5 L1239.5 771.5 L1240.6 775.5 L1241.6 779.5 L1242.6 783.5 L1243.7 787.5 L1244.7 791.5 L1245.7 795.5 L1246.7 799.5 L1247.7 803.5 L1248.7 807.5 L1249.6 811.5 L1250.6 815.5 L1251.6 819.5 L1252.6 823.5 L1253.5 827.5 L1254.5 831.5 L1255.5 835.5 L1256.4 839.5 L1257.4 843.5 L1258.4 847.5 L1259.4 851.5 L1260.3 855.5 L1261.3 859.5 L1262.3 863.5 L1263.3 867.5 L1264.3 871.5 L1265.3 875.5 L1266.3 879.5 L1267.3 883.5 L1268.3 887.5 L1269.4 891.5 L1270.4 895.5 L1271.5 899.5 L1272.5 903.5 L1273.6 907.5 L1274.7 911.5 L1275.8 915.5 L1276.9 919.5 L1278 923.5 L1279.2 927.5 L1280.3 931.5 L1281.5 935.5 L1282.7 939.5 L1283.9 943.5 L1285.1 947.5 L1286.3 951.5 L1287.6 955.5 L1288.9 959.5 L1289 960" stroke="#1e1e1e"/>
<path d="M697.1 337.3 L705.7 341.3 L714.3 345.3 L722.9 349.3 L731.6 353.3 L740.3 357.3 L749 361.3 L757.7 365.3 L766.4 369.3 L775.1 373.3 L783.8 377.3 L792.6 381.3 L801.2 385.3 L809.9 389.3 L818.6 393.3 L827.2 397.3 L835.8 401.3 L844.3 405.3 L852.9 409.3 L861.3 413.3 L869.7 417.3 L878.1 421.3 L886.4 425.3 L894.6 429.3 L902.8 433.3 L910.8 437.3 L918.9 441.3 L926.8 445.3 L934.6 449.3 L942.3 453.3 L950 457.3 L957.5 461.3 L964.9 465.3 L972.2 469.3 L979.4 473.3 L986.5 477.3 L993.4 481.3 L1000.2 485.3 L1006.9 489.3 L1013.5 493.3 L1019.9 497.3 L1026.2 501.3 L1032.3 505.3 L1038.4 509.3 L1044.3 513.3 L1050 517.3 L1055.7 521.3 L1061.2 525.3 L1066.5 529.3 L1071.7 533.3 L1076.8 537.3 L1081.8 541.3 L1086.6 545.3 L1091.3 549.3 L1095.8 553.3 L1100.2 557.3 L1104.5 561.3 L1108.7 565.3 L1112.7 569.3 L1116.6 573.3 L1120.4 577.3 L1124 581.3 L1127.6 585.3 L1131 589.3 L1134.4 593.3 L1137.6 597.3 L1140.7 601.3 L1143.7 605.3 L1146.6 609.3 L1149.5 613.3 L1152.2 617.3 L1154.8 621.3 L1157.4 625.3 L1159.8 629.3 L1162.2 633.3 L1164.5 637.3 L1166.8 641.3 L1168.9 645.3 L1171 649.3 L1173 653.3 L1175 657.3 L1176.8 661.3 L1178.7 665.3 L1180.4 669.3 L1182.1 673.3 L1183.8 677.3 L1185.4 681.3 L1187 685.3 L1188.5 689.3 L1190 693.3 L1191.4 697.3 L1192.8 701.3 L1194.2 705.3 L1195.5 709.3 L1196.8 713.3 L1198.1 717.3 L1199.4 721.3 L1200.6 725.3 L1201.9 729.3 L1203.1 733.3 L1204.2 737.3 L1205.4 741.3 L1206.5 745.3 L1207.7 749.3 L1208.8 753.3 L1209.9 757.3 L1210.9 761.3 L1212 765.3 L1213.1 769.3 L1214.1 773.3 L1215.1 777.3 L1216.1 781.3 L1217.1 785.3 L1218.1 789.3 L1219.1 793.3 L1220.1 797.3 L1221 801.3 L1222 805.3 L1223 809.3 L1223.9 813.3 L1224.8 817.3 L1225.8 821.3 L1226.7 825.3 L1227.6 829.3 L1228.6 833.3 L1229.5 837.3 L1230.4 841.3 L1231.3 845.3 L1232.3 849.3 L1233.2 853.3 L1234.1 857.3 L1235 861.3 L1236 865.3 L1236.9 869.3 L1237.9 873.3 L1238.8 877.3 L1239.8 881.3 L1240.7 885.3 L1241.7 889.3 L1242.7 893.3 L1243.7 897.3 L1244.7 901.3 L1245.7 905.3 L1246.7 909.3 L1247.8 913.3 L1248.8 917.3 L1249.9 921.3 L1250.9 925.3 L1252 929.3 L1253.1 933.3 L1254.3 937.3 L1255.4 941.3 L1256.6 945.3 L1257.8 949.3 L1259 953.3 L1260.2 957.3 L1261 960" stroke="#1e1e1e"/>
<path d="M707.2 368.6 L715.3 372.6 L723.5 376.6 L731.8 380.6 L740.1 384.6 L748.6 388.6 L757.1 392.6 L765.7 396.6 L774.3 400.6 L783 404.6 L791.7 408.6 L800.4 412.6 L809.1 416.6 L817.8 420.6 L826.5 424.6 L835.2 428.6 L843.9 432.6 L852.6 436.6 L861.2 440.6 L869.7 444.6 L878.2 448.6 L886.6 452.6 L895 456.6 L903.2 460.6 L911.4 464.6 L919.4 468.6 L927.4 472.6 L935.2 476.6 L942.9 480.6 L950.4 484.6 L957.8 488.6 L965.1 492.6 L972.2 496.6 L979.2 500.6 L986.1 504.6 L992.8 508.6 L999.4 512.6 L1005.9 516.6 L1012.2 520.6 L1018.4 524.6 L1024.5 528.6 L1030.4 532.6 L1036.1 536.6 L1041.8 540.6 L1047.2 544.6 L1052.6 548.6 L1057.8 552.6 L1062.9 556.6 L1067.8 560.6 L1072.6 564.6 L1077.2 568.6 L1081.7 572.6 L1086.1 576.6 L1090.3 580.6 L1094.4 584.6 L1098.3 588.6 L1102.1 592.6 L1105.8 596.6 L1109.4 600.6 L1112.8 604.6 L1116.1 608.6 L1119.3 612.6 L1122.4 616.6 L1125.3 620.6 L1128.2 624.6 L1130.9 628.6 L1133.6 632.6 L1136.2 636.6 L1138.6 640.6 L1141 644.6 L1143.3 648.6 L1145.5 652.6 L1147.6 656.6 L1149.7 660.6 L1151.7 664.6 L1153.6 668.6 L1155.4 672.6 L1157.2 676.6 L1158.9 680.6 L1160.6 684.6 L1162.2 688.6 L1163.8 692.6 L1165.3 696.6 L1166.7 700.6 L1168.2 704.6 L1169.6 708.6 L1170.9 712.6 L1172.3 716.6 L1173.6 720.6 L1174.9 724.6 L1176.1 728.6 L1177.3 732.6 L1178.6 736.6 L1179.7 740.6 L1180.9 744.6 L1182 748.6 L1183.2 752.6 L1184.3 756.6 L1185.4 760.6 L1186.4 764.6 L1187.5 768.6 L1188.5 772.6 L1189.5 776.6 L1190.5 780.6 L1191.5 784.6 L1192.5 788.6 L1193.5 792.6 L1194.4 796.6 L1195.4 800.6 L1196.3 804.6 L1197.2 808.6 L1198.1 812.6 L1199 816.6 L1199.9 820.6 L1200.8 824.6 L1201.7 828.6 L1202.6 832.6 L1203.4 836.6 L1204.3 840.6 L1205.2 844.6 L1206 848.6 L1206.9 852.6 L1207.7 856.6 L1208.6 860.6 L1209.5 864.6 L1210.3 868.6 L1211.2 872.6 L1212.1 876.6 L1212.9 880.6 L1213.8 884.6 L1214.7 888.6 L1215.6 892.6 L1216.5 896.6 L1217.4 900.6 L1218.3 904.6 L1219.2 908.6 L1220.1 912.6 L1221 916.6 L1222 920.6 L1222.9 924.6 L1223.9 928.6 L1224.9 932.6 L1225.9 936.6 L1226.9 940.6 L1227.9 944.6 L1229 948.6 L1230 952.6 L1231.1 956.6 L1232 960" stroke="#1e1e1e"/>
<path d="M719 400.8 L727.8 404.8 L736.7 408.8 L745.5 412.8 L754.3 416.8 L763.1 420.8 L771.9 424.8 L780.7 428.8 L789.4 432.8 L798.1 436.8 L806.7 440.8 L815.4 444.8 L823.9 448.8 L832.5 452.8 L840.9 456.8 L849.3 460.8 L857.7 464.8 L866 468.8 L874.2 472.8 L882.3 476.8 L890.4 480.8 L898.4 484.8 L906.2 488.8 L914 492.8 L921.7 496.8 L929.3 500.8 L936.8 504.8 L944.2 508.8 L951.5 512.8 L958.7 516.8 L965.7 520.8 L972.6 524.8 L979.4 528.8 L986.1 532.8 L992.6 536.8 L998.9 540.8 L1005.2 544.8 L1011.2 548.8 L1017.2 552.8 L1022.9 556.8 L1028.6 560.8 L1034 564.8 L1039.4 568.8 L1044.6 572.8 L1049.7 576.8 L1054.6 580.8 L1059.4 584.8 L1064 588.8 L1068.6 592.8 L1072.9 596.8 L1077.2 600.8 L1081.3 604.8 L1085.3 608.8 L1089.1 612.8 L1092.8 616.8 L1096.4 620.8 L1099.8 624.8 L1103.1 628.8 L1106.3 632.8 L1109.3 636.8 L1112.2 640.8 L1115 644.8 L1117.6 648.8 L1120.1 652.8 L1122.4 656.8 L1124.6 660.8 L1126.7 664.8 L1128.6 668.8 L1130.5 672.8 L1132.2 676.8 L1133.9 680.8 L1135.4 684.8 L1136.9 688.8 L1138.3 692.8 L1139.7 696.8 L1141 700.8 L1142.3 704.8 L1143.5 708.8 L1144.8 712.8 L1146 716.8 L1147.2 720.8 L1148.4 724.8 L1149.5 728.8 L1150.7 732.8 L1151.9 736.8 L1153.1 740.8 L1154.2 744.8 L1155.4 748.8 L1156.5 752.8 L1157.7 756.8 L1158.8 760.8 L1159.9 764.8 L1161 768.8 L1162.1 772.8 L1163.2 776.8 L1164.2 780.8 L1165.3 784.8 L1166.3 788.8 L1167.4 792.8 L1168.4 796.8 L1169.4 800.8 L1170.3 804.8 L1171.3 808.8 L1172.2 812.8 L1173.2 816.8 L1174.1 820.8 L1175 824.8 L1175.8 828.8 L1176.7 832.8 L1177.5 836.8 L1178.3 840.8 L1179.1 844.8 L1179.9 848.8 L1180.6 852.8 L1181.3 856.8 L1182 860.8 L1182.7 864.8 L1183.4 868.8 L1184 872.8 L1184.6 876.8 L1185.2 880.8 L1185.9 884.8 L1186.5 888.8 L1187.1 892.8 L1187.7 896.8 L1188.4 900.8 L1189 904.8 L1189.7 908.8 L1190.4 912.8 L1191.2 916.8 L1191.9 920.8 L1192.7 924.8 L1193.6 928.8 L1194.5 932.8 L1195.4 936.8 L1196.4 940.8 L1197.4 944.8 L1198.6 948.8 L1199.7 952.8 L1201 956.8 L1202 960" stroke="#1e1e1e"/>
<path d="M737.2 435.8 L745.9 439.8 L754.6 443.8 L763.4 447.8 L772.1 451.8 L780.9 455.8 L789.7 459.8 L798.4 463.8 L807.1 467.8 L815.8 471.8 L824.5 475.8 L833.1 479.8 L841.7 483.8 L850.2 487.8 L858.6 491.8 L867 495.8 L875.3 499.8 L883.6 503.8 L891.7 507.8 L899.8 511.8 L907.7 515.8 L915.5 519.8 L923.3 523.8 L930.9 527.8 L938.3 531.8 L945.7 535.8 L952.8 539.8 L959.9 543.8 L966.7 547.8 L973.5 551.8 L980 555.8 L986.4 559.8 L992.6 563.8 L998.7 567.8 L1004.6 571.8 L1010.4 575.8 L1016 579.8 L1021.4 583.8 L1026.8 587.8 L1031.9 591.8 L1036.9 595.8 L1041.8 599.8 L1046.5 603.8 L1051 607.8 L1055.4 611.8 L1059.7 615.8 L1063.8 619.8 L1067.8 623.8 L1071.6 627.8 L1075.2 631.8 L1078.8 635.8 L1082.1 639.8 L1085.3 643.8 L1088.4 647.8 L1091.4 651.8 L1094.1 655.8 L1096.8 659.8 L1099.3 663.8 L1101.6 667.8 L1103.9 671.8 L1106 675.8 L1108 679.8 L1109.9 683.8 L1111.7 687.8 L1113.4 691.8 L1115.1 695.8 L1116.6 699.8 L1118.1 703.8 L1119.6 707.8 L1120.9 711.8 L1122.3 715.8 L1123.5 719.8 L1124.8 723.8 L1126 727.8 L1127.2 731.8 L1128.3 735.8 L1129.4 739.8 L1130.5 743.8 L1131.5 747.8 L1132.5 751.8 L1133.5 755.8 L1134.5 759.8 L1135.4 763.8 L1136.3 767.8 L1137.2 771.8 L1138 775.8 L1138.8 779.8 L1139.6 783.8 L1140.4 787.8 L1141.2 791.8 L1141.9 795.8 L1142.6 799.8 L1143.3 803.8 L1144 807.8 L1144.7 811.8 L1145.4 815.8 L1146 819.8 L1146.6 823.8 L1147.3 827.8 L1147.9 831.8 L1148.5 835.8 L1149.1 839.8 L1149.6 843.8 L1150.2 847.8 L1150.8 851.8 L1151.4 855.8 L1151.9 859.8 L1152.5 863.8 L1153.1 867.8 L1153.6 871.8 L1154.2 875.8 L1154.7 879.8 L1155.3 883.8 L1155.9 887.8 L1156.5 891.8 L1157 895.8 L1157.6 899.8 L1158.2 903.8 L1158.8 907.8 L1159.4 911.8 L1160.1 915.8 L1160.7 919.8 L1161.3 923.8 L1162 927.8 L1162.7 931.8 L1163.4 935.8 L1164.1 939.8 L1164.8 943.8 L1165.5 947.8 L1166.3 951.8 L1167.1 955.8 L1167.9 959.8 L1167.9 960" stroke="#f01d1d"/>
<path d="M934 200 L943.5 204 L952.9 208 L962.1 212 L971.3 216 L980.2 220 L989.1 224 L997.8 228 L1006.4 232 L1014.9 236 L1023.2 240 L1031.4 244 L1039.5 248 L1047.5 252 L1055.3 256 L1063 260 L1070.6 264 L1078.1 268 L1085.4 272 L1092.7 276 L1099.8 280 L1106.8 284 L1113.7 288 L1120.5 292 L1127.1 296 L1133.7 300 L1140.2 304 L1146.5 308 L1152.7 312 L1158.9 316 L1164.9 320 L1170.8 324 L1176.6 328 L1182.3 332 L1187.9 336 L1193.4 340 L1198.9 344 L1204.2 348 L1209.4 352 L1214.5 356 L1219.6 360 L1224.5 364 L1229.4 368 L1234.1 372 L1238.8 376 L1243.4 380 L1247.9 384 L1252.3 388 L1256.6 392 L1260.8 396 L1265 400 L1269 404 L1273 408 L1277 412 L1280.8 416 L1284.6 420 L1288.2 424 L1291.9 428 L1295.4 432 L1298.9 436 L1302.3 440 L1305.6 444 L1308.9 448 L1312.1 452 L1315.2 456 L1318.3 460 L1321.3 464 L1324.3 468 L1327.2 472 L1330.1 476 L1332.9 480 L1335.6 484 L1338.3 488 L1340.9 492 L1343.5 496 L1346.1 500 L1348.6 504 L1351 508 L1353.4 512 L1355.8 516 L1358.1 520 L1360.3 524 L1362.6 528 L1364.7 532 L1366.9 536 L1369 540 L1371 544 L1373.1 548 L1375 552 L1377 556 L1378.9 560 L1380.8 564 L1382.6 568 L1384.4 572 L1386.2 576 L1387.9 580 L1389.6 584 L1391.3 588 L1392.9 592 L1394.5 596 L1396.1 600 L1397.7 604 L1399.2 608 L1400.7 612 L1402.2 616 L1403.6 620 L1405 624 L1406.4 628 L1407.8 632 L1409.2 636 L1410.5 640 L1411.8 644 L1413.1 648 L1414.4 652 L1415.7 656 L1416.9 660 L1418.2 664 L1419.4 668 L1420.6 672 L1421.8 676 L1423 680 L1424.1 684 L1425.3 688 L1426.4 692 L1427.6 696 L1428.7 700 L1429.8 704 L1430.9 708 L1432 712 L1433.1 716 L1434.2 720 L1435.3 724 L1436.4 728 L1437.5 732 L1438.6 736 L1439.7 740 L1440.8 744 L1441.9 748 L1443 752 L1444.1 756 L1445.2 760 L1446.3 764 L1447.4 768 L1448.5 772 L1449.6 776 L1450.7 780 L1451.9 784 L1453 788 L1454.2 792 L1455.3 796 L1456.5 800 L1457.7 804 L1458.8 808 L1460 812 L1461.2 816 L1462.4 820 L1463.5 824 L1464.7 828 L1465.9 832 L1467.1 836 L1468.2 840 L1469.4 844 L1470.6 848 L1471.7 852 L1472.9 856 L1474 860 L1475.2 864 L1476.3 868 L1477.5 872 L1478.6 876 L1479.7 880 L1480.8 884 L1481.9 888 L1483 892 L1484.1 896 L1485.1 900 L1486.2 904 L1487.2 908 L1488.2 912 L1489.2 916 L1490.2 920 L1491.2 924 L1492.1 928 L1493.1 932 L1494 936 L1494.9 940" stroke="#1e1e1e"/>
<path d="M999.9 200 L1008.6 204 L1017.2 208 L1025.7 212 L1034.1 216 L1042.3 220 L1050.5 224 L1058.5 228 L1066.3 232 L1074.1 236 L1081.8 240 L1089.3 244 L1096.7 248 L1104 252 L1111.2 256 L1118.3 260 L1125.3 264 L1132.1 268 L1138.9 272 L1145.5 276 L1152.1 280 L1158.5 284 L1164.8 288 L1171.1 292 L1177.2 296 L1183.2 300 L1189.1 304 L1195 308 L1200.7 312 L1206.3 316 L1211.9 320 L1217.3 324 L1222.6 328 L1227.9 332 L1233.1 336 L1238.1 340 L1243.1 344 L1248 348 L1252.8 352 L1257.5 356 L1262.2 360 L1266.7 364 L1271.2 368 L1275.6 372 L1279.9 376 L1284.1 380 L1288.3 384 L1292.3 388 L1296.3 392 L1300.2 396 L1304.1 400 L1307.8 404 L1311.5 408 L1315.1 412 L1318.7 416 L1322.2 420 L1325.6 424 L1328.9 428 L1332.2 432 L1335.4 436 L1338.5 440 L1341.6 444 L1344.6 448 L1347.6 452 L1350.5 456 L1353.3 460 L1356.1 464 L1358.8 468 L1361.5 472 L1364.1 476 L1366.7 480 L1369.2 484 L1371.6 488 L1374 492 L1376.4 496 L1378.7 500 L1380.9 504 L1383.1 508 L1385.3 512 L1387.4 516 L1389.5 520 L1391.5 524 L1393.5 528 L1395.4 532" stroke="#1e1e1e"/>
<path d="M1060.2 200 L1068.6 204 L1076.8 208 L1084.9 212 L1092.8 216 L1100.6 220 L1108.3 224 L1115.9 228 L1123.3 232 L1130.6 236 L1137.8 240 L1144.8 244 L1151.8 248 L1158.6 252 L1165.2 256 L1171.8 260 L1178.2 264 L1184.6 268 L1190.8 272 L1196.9 276 L1202.9 280 L1208.7 284 L1214.5 288 L1220.2 292 L1225.7 296 L1231.1 300 L1236.5 304 L1241.7 308 L1246.9 312 L1251.9 316 L1256.8 320 L1261.7 324 L1266.4 328 L1271 332 L1275.6 336 L1280.1 340 L1284.4 344 L1288.7 348 L1292.9 352 L1297 356 L1301 360 L1305 364 L1308.8 368 L1312.6 372 L1316.3 376 L1320.1 380 L1323.8 384 L1327.6 388 L1331.4 392 L1335.3 396 L1339.3 400 L1343.5 404" stroke="#1e1e1e"/>
<path d="M1119.8 200 L1127.6 204 L1135.2 208 L1142.6 212 L1150 216 L1157.2 220 L1164.2 224 L1171.1 228 L1177.9 232 L1184.6 236 L1191.1 240 L1197.6 244 L1203.9 248 L1210.1 252 L1216.1 256 L1222.1 260 L1228 264 L1233.7 268 L1239.4 272 L1244.9 276 L1250.4 280 L1255.7 284 L1261 288 L1266.1 292 L1271.2 296 L1276.2 300 L1281.1 304 L1286 308 L1290.7 312 L1295.4 316 L1300 320 L1304.6 324 L1309 328 L1313.4 332 L1317.8 336" stroke="#f01d1d"/>
<path d="M1180 205 L1188.6 209 L1196.6 213 L1204.2 217 L1211.4 221 L1218.2 225 L1224.6 229 L1230.8 233 L1236.7 237 L1242.4 241 L1247.9 245 L1253.3 249 L1258.6 253 L1263.9 257 L1269.1 261 L1274.4 265 L1279.8 269 L1285.3 273 L1291 277 L1296.8 281" stroke="#1e1e1e"/>
<path d="M1235 207 L1243.7 211 L1251.7 215 L1259.1 219 L1265.9 223 L1272 227 L1277.4 231" stroke="#1e1e1e"/>
<path d="M1431.7 628.1 L1433.1 632.1 L1434.5 636.1 L1435.9 640.1 L1437.2 644.1 L1438.6 648.1 L1439.9 652.1 L1441.3 656.1 L1442.6 660.1 L1443.9 664.1 L1445.2 668.1 L1446.5 672.1 L1447.8 676.1 L1449 680.1 L1450.3 684.1 L1451.6 688.1 L1452.8 692.1 L1454.1 696.1 L1455.3 700.1 L1456.5 704.1 L1457.7 708.1 L1458.9 712.1 L1460.1 716.1 L1461.3 720.1 L1462.5 724.1 L1463.7 728.1 L1464.9 732.1 L1466.1 736.1 L1467.2 740.1 L1468.4 744.1 L1469.5 748.1 L1470.7 752.1 L1471.8 756.1 L1473 760.1 L1474.1 764.1 L1475.3 768.1 L1476.4 772.1 L1477.5 776.1 L1478.6 780.1 L1479.8 784.1 L1480.9 788.1 L1482 792.1 L1483.1 796.1 L1484.2 800.1 L1485.3 804.1 L1486.4 808.1 L1487.5 812.1 L1488.6 816.1 L1489.8 820.1 L1490.9 824.1 L1492 828.1 L1493.1 832.1 L1494.2 836.1 L1495.3 840.1 L1496.4 844.1 L1497.5 848.1 L1498.6 852.1 L1499.7 856.1 L1500.8 860.1 L1501.9 864.1 L1503 868.1 L1504.1 872.1 L1505.2 876.1 L1506.4 880.1 L1507.5 884.1 L1508.6 888.1 L1509.7 892.1 L1510.8 896.1 L1512 900.1 L1513.1 904.1" stroke="#1e1e1e"/>
<path d="M752.2 467.4 L752.9 467.7 L752.9 467.7 L752.8 467.6 L753.3 467.8 L754.8 468.6 L758.1 470.1 L763.7 472.8 L772.2 477 L784.8 483.1 L801.5 491.2 L820.9 500.6 L841.8 510.7 L863 521 L883.1 530.9 L900.9 539.8 L915.1 547 L925.7 552.7 L934 557.3 L940.4 561.2 L945.5 564.5 L950 567.5 L954.2 570.4 L958.8 573.5 L964.4 577 L970.6 580.6 L976.8 584 L983 587.4 L989.2 590.8 L995.4 594.3 L1001.7 598.1 L1008.1 602.3 L1014.6 607 L1021.4 612.2 L1028.5 617.9 L1035.8 623.8 L1043.1 630.1 L1050.2 636.6 L1057 643.3 L1063.3 650.1 L1068.8 657 L1073.7 664.3 L1078 672.2 L1081.9 680.4 L1085.5 688.7 L1088.6 696.8 L1091.5 704.4 L1094.1 711.2 L1096.4 717 L1098.3 721.5 L1099.7 724.9 L1100.7 727.5 L1101.5 729.6 L1102.1 731.6 L1102.8 733.8 L1103.6 736.5 L1104.7 740 L1106.1 744.3 L1107.7 749.2 L1109.4 754.4 L1111.2 759.8 L1112.9 765.4 L1114.6 771.1 L1116 776.6 L1117.3 782 L1118.3 787.3 L1119.3 792.6 L1120.1 797.9 L1120.8 803.2 L1121.3 808.4 L1121.8 813.6 L1122.2 818.8 L1122.5 823.8 L1122.7 828.9 L1122.8 834.3 L1122.9 839.7 L1122.8 845 L1122.6 850 L1122.4 854.5 L1122 858.4 L1121.5 861.5 L1120.9 863.6 L1120.2 864.7 L1119.3 865.2 L1118.4 865.2 L1117.4 865.1 L1116.3 864.9 L1115.2 865 L1114 865.6 L1112.7 866.7 L1111.4 868.2 L1109.9 869.9 L1108.4 871.6 L1106.8 873.3 L1105.3 874.7 L1103.9 875.6 L1102.6 876.1 L1101.4 876 L1100.2 875.6 L1099.1 874.8 L1098.1 873.7 L1097.1 872.4 L1096.1 871 L1095.1 869.4 L1094.2 867.7 L1093.3 865.9 L1092.4 863.9 L1091.6 861.7 L1090.8 859.4 L1090.1 856.9 L1089.4 854.4 L1088.7 851.7 L1088 849 L1087.4 846.1 L1086.9 843.1 L1086.5 839.8 L1086 836.5 L1085.6 833.2 L1085.1 830 L1084.5 826.8 L1083.8 823.8 L1083 821 L1082.1 818.3 L1081.1 815.6 L1080.1 813 L1079 810.5 L1077.9 807.9 L1076.7 805.4 L1075.4 802.8 L1074 800.3 L1072.6 798.1 L1071.1 795.9 L1069.5 793.7 L1067.9 791.3 L1066.2 788.6 L1064.5 785.5 L1062.8 781.9 L1061 777.4 L1059 772.1 L1056.9 766.3 L1054.9 760.2 L1052.9 754.3 L1051.1 748.7 L1049.5 743.8 L1048.2 740 L1047.4 737.3 L1047.1 735.3 L1047.1 734.1 L1047.2 733.2 L1047.3 732.6 L1047.2 732.1 L1046.7 731.4 L1045.6 730.4 L1043.9 729.1 L1041.6 727.8 L1038.9 726.5 L1036 725.1 L1033.1 723.8 L1030.2 722.6 L1027.7 721.4 L1025.5 720.4 L1023.8 719.6 L1022.3 718.9 L1021.1 718.3 L1020 717.8 L1018.9 717.2 L1017.9 716.7 L1016.7 716.1 L1015.4 715.4 L1013.9 714.6 L1012.4 713.6 L1010.9 712.6 L1009.2 711.6 L1007.6 710.6 L1006 709.6 L1004.4 708.6 L1002.8 707.8 L1001.3 707.1 L1000 706.4 L998.7 705.8 L997.3 705.2 L995.9 704.7 L994.3 704.1 L992.5 703.5 L990.3 702.8 L987.7 702 L984.7 701.1 L981.4 700.2 L978 699.3 L974.5 698.3 L971.1 697.5 L967.9 696.7 L965 696 L962.4 695.5 L960 695.1 L957.7 694.8 L955.5 694.5 L953.4 694.2 L951.2 694 L949 693.7 L946.6 693.3 L944.1 692.8 L941.6 692.3 L939 691.7 L936.3 691 L933.7 690.4 L931 689.9 L928.3 689.4 L925.7 689.1 L923.1 688.9 L920.5 688.7 L917.8 688.7 L915.2 688.6 L912.6 688.7 L909.9 688.8 L907.3 688.9 L904.7 689.1 L902 689.3 L899.3 689.7 L896.6 690.1 L893.9 690.5 L891.3 691 L888.7 691.4 L886.2 691.9 L883.8 692.3 L881.6 692.7 L879.4 693.2 L877.3 693.7 L875.3 694.2 L873.4 694.6 L871.5 695 L869.8 695.3 L868.1 695.4 L866.6 695.4 L865.2 695.3 L864 695.1 L862.9 694.9 L861.7 694.5 L860.5 694.2 L859.1 693.7 L857.6 693.3 L855.9 692.8 L854 692.1 L852 691.3 L849.9 690.5 L847.9 689.7 L845.8 689 L843.8 688.5 L841.9 688.1 L840 687.9 L838 687.9 L836 688.1 L834.1 688.3 L832.3 688.5 L830.7 688.8 L829.3 689 L828.3 689.1" stroke="#1e1e1e"/>
<path d="M757.4 495.2 L765.7 499.3 L777 505 L790.6 511.8 L805.4 519.2 L820.8 526.9 L835.7 534.4 L849.3 541.2 L860.8 547 L870.2 551.7 L878.3 555.7 L885.6 559.3 L892.2 562.5 L898.6 565.8 L905 569.1 L911.9 572.8 L919.5 577 L927.9 581.8 L936.9 587.1 L946.3 592.7 L955.7 598.5 L965.1 604.3 L974 609.9 L982.4 615.2 L990 620 L996.8 624.4 L1003.2 628.6 L1009.1 632.6 L1014.7 636.4 L1019.8 640 L1024.5 643.4 L1028.9 646.8 L1033 650 L1036.7 653 L1039.8 655.6 L1042.5 658 L1044.9 660.4 L1047 662.7 L1049.1 665.3 L1051 668.1 L1053 671.4 L1055 675.2 L1056.7 679.3 L1058.4 683.7 L1059.9 688.2 L1061.4 692.9 L1062.8 697.6 L1064.3 702.2 L1065.7 706.6 L1067.1 710.9 L1068.5 715.3 L1069.8 719.7 L1071.1 724.1 L1072.4 728.3 L1073.7 732.4 L1075 736.3 L1076.4 740 L1077.8 743.4 L1079.3 746.5 L1080.7 749.4 L1082.2 752.1 L1083.7 754.8 L1085.2 757.5 L1086.6 760.2 L1088 763 L1089.4 766 L1090.9 769.1 L1092.4 772.2 L1093.8 775.3 L1095.2 778.4 L1096.4 781.2 L1097.5 783.8 L1098.4 786 L1099.1 787.9 L1099.7 789.4 L1100.1 790.8 L1100.4 791.9 L1100.6 792.9 L1100.6 793.8 L1100.6 794.6 L1100.5 795.5 L1100.3 796.4 L1099.9 797.2 L1099.4 797.9 L1098.8 798.6 L1098.1 799.2 L1097.4 799.6 L1096.7 799.9 L1096 800 L1095.3 799.9 L1094.6 799.7 L1093.8 799.3 L1093 798.8 L1092.2 798.2 L1091.4 797.5 L1090.7 796.7 L1090 796 L1089.4 795.1 L1088.9 794 L1088.4 792.9 L1088 791.6 L1087.6 790.4 L1087.1 789.4 L1086.6 788.5 L1086 788 L1085.4 787.9 L1084.8 788.2 L1084.1 788.7 L1083.4 789.4 L1082.7 790 L1081.9 790.4 L1081 790.5 L1080 790 L1078.9 789.1 L1077.6 787.9 L1076.3 786.5 L1074.9 784.8 L1073.5 782.8 L1072 780.6 L1070.5 778.2 L1069 775.6 L1067.5 772.5 L1065.9 768.8 L1064.2 764.8 L1062.6 760.6 L1061 756.4 L1059.4 752.5 L1057.9 749.1 L1056.5 746.3 L1055.2 744.3 L1054 742.8 L1052.8 741.8 L1051.7 741.1 L1050.7 740.5 L1049.7 739.9 L1048.8 739.1 L1048 738 L1047.3 736.6 L1046.9 735 L1046.5 733.3 L1046.2 731.6 L1045.9 729.9 L1045.5 728.2 L1045 726.7 L1044.3 725.4 L1043.4 724.3 L1042.4 723.4 L1041.2 722.6 L1040 721.9 L1038.7 721.2 L1037.6 720.5 L1036.5 719.8 L1035.5 719.1 L1034.7 718.3 L1034.1 717.4 L1033.5 716.5 L1033 715.6 L1032.5 714.8 L1031.9 714 L1031.3 713.3 L1030.5 712.8 L1029.6 712.4 L1028.7 712.3 L1027.6 712.3 L1026.6 712.3 L1025.5 712.3 L1024.3 712.2 L1023 712 L1021.7 711.6 L1020.4 711 L1019.2 710.3 L1018 709.5 L1016.8 708.6 L1015.3 707.6 L1013.6 706.5 L1011.5 705.3 L1009 704 L1006 702.6 L1002.6 700.9 L998.9 699.2 L994.9 697.3 L990.7 695.5 L986.4 693.6 L982 691.8 L977.7 690.2 L973.1 688.6 L968.2 687.1 L963 685.5 L957.8 684 L952.7 682.6 L947.9 681.3 L943.6 680.1 L940 679 L937.1 678.1 L934.9 677.3 L933.2 676.7 L931.8 676.2 L930.5 675.7 L929.2 675.3 L927.6 674.9 L925.7 674.5 L923.4 674.1 L920.9 673.7 L918.3 673.4 L915.6 673 L912.9 672.8 L910.1 672.6 L907.4 672.4 L904.7 672.4 L902.1 672.5 L899.5 672.7 L896.9 673 L894.3 673.3 L891.6 673.7 L889 674 L886.4 674.3 L883.8 674.5 L881.2 674.6 L878.6 674.7 L875.9 674.7 L873.3 674.7 L870.7 674.7 L868 674.7 L865.4 674.6 L862.8 674.5 L860.2 674.4 L857.5 674.2 L854.9 673.9 L852.2 673.6 L849.6 673.4 L847 673.2 L844.4 673 L841.9 672.9 L839.3 672.9 L836.6 673 L833.8 673.1 L831.1 673.3 L828.6 673.5 L826.3 673.7 L824.4 673.8 L823 673.9" stroke="#1e1e1e"/>
<path d="M766 524 L769.4 525.7 L773.8 528 L779 530.6 L784.9 533.6 L791.2 536.9 L797.8 540.2 L804.3 543.6 L810.7 547 L816.9 550.3 L823.1 553.7 L829.4 557.1 L835.8 560.6 L842.6 564.3 L849.7 568.3 L857.4 572.5 L865.6 577 L874.7 582 L884.8 587.6 L895.5 593.5 L906.5 599.6 L917.5 605.7 L928.3 611.6 L938.4 617.1 L947.5 622 L955.9 626.4 L963.9 630.3 L971.5 634 L978.7 637.5 L985.4 640.7 L991.7 643.9 L997.5 646.9 L1002.8 650 L1007.5 653 L1011.7 655.8 L1015.4 658.6 L1018.6 661.2 L1021.4 663.8 L1023.9 666.3 L1026.1 668.8 L1028 671.4 L1029.5 674 L1030.6 676.7 L1031.2 679.4 L1031.6 682.1 L1031.7 684.7 L1031.7 687.2 L1031.7 689.4 L1031.7 691.5 L1031.7 693.4 L1031.6 695.1 L1031.4 696.8 L1031.2 698.2 L1030.8 699.5 L1030.3 700.6 L1029.8 701.5 L1029.2 702.2 L1028.5 702.6 L1027.8 702.8 L1026.9 702.8 L1026 702.6 L1025 702.3 L1024 701.7 L1022.9 701.1 L1021.7 700.3 L1020.5 699.3 L1019.2 698 L1017.9 696.6 L1016.5 695 L1015.1 693.4 L1013.6 691.8 L1012 690.3 L1010.4 689 L1008.7 687.9 L1007 686.8 L1005.1 685.9 L1003.2 685 L1001.3 684.1 L999.3 683.2 L997.3 682.3 L995.3 681.4 L993.2 680.4 L991.1 679.5 L989 678.5 L986.8 677.6 L984.6 676.6 L982.3 675.7 L980 674.8 L977.7 673.9 L975.3 673 L972.9 672.2 L970.4 671.3 L967.9 670.4 L965.3 669.6 L962.8 668.9 L960.2 668.2 L957.6 667.6 L955 667.1 L952.3 666.7 L949.6 666.4 L946.9 666.1 L944.2 665.8 L941.5 665.6 L938.8 665.3 L936.1 665 L933.4 664.6 L930.6 664.2 L927.8 663.8 L925 663.4 L922.2 662.9 L919.7 662.5 L917.3 662.2 L915.2 661.9 L913.4 661.7 L911.8 661.5 L910.5 661.3 L909.3 661.2 L908.2 661.1 L907.1 661 L905.9 660.9 L904.7 660.8 L903.4 660.7 L902 660.6 L900.6 660.5 L899.3 660.4 L897.9 660.3 L896.6 660.1 L895.4 660 L894.2 659.8 L893.1 659.5 L892.1 659.2 L891.1 658.8 L890.2 658.4 L889.3 658.1 L888.5 657.8 L887.7 657.7 L886.9 657.7 L886.2 658 L885.6 658.4 L885.2 659 L884.7 659.7 L884.2 660.4 L883.5 661 L882.7 661.5 L881.7 661.9 L880.4 662.1 L878.9 662.3 L877.3 662.3 L875.6 662.4 L873.7 662.3 L871.8 662.2 L870 662.1 L868.1 661.9 L866.2 661.6 L864.2 661.2 L862.1 660.7 L860.1 660.2 L858 659.7 L856 659.3 L854.1 658.9 L852.4 658.7 L850.9 658.7 L849.5 658.7 L848.2 658.9 L847 659.2 L845.8 659.4 L844.6 659.6 L843.3 659.8 L841.9 659.8 L840.4 659.7 L838.9 659.4 L837.3 659.1 L835.7 658.8 L834.1 658.4 L832.5 658.1 L830.9 657.9 L829.3 657.7 L827.7 657.6 L826 657.7 L824.2 657.7 L822.5 657.8 L820.9 657.9 L819.4 658 L818.2 658.1 L817.3 658.2" stroke="#1e1e1e"/>
<path d="M782.1 555.6 L784.8 557.2 L788.4 559.3 L792.6 561.7 L797.3 564.5 L802.4 567.5 L807.7 570.6 L813 573.8 L818.2 577 L823.6 580.3 L829.4 584 L835.5 587.8 L841.7 591.7 L847.8 595.5 L853.6 599.2 L859 602.6 L863.8 605.5 L867.9 608 L871.5 610 L874.7 611.8 L877.6 613.4 L880.4 614.9 L883.1 616.4 L885.9 618.1 L889 620 L892.3 622.2 L895.9 624.6 L899.5 627.1 L903.1 629.6 L906.6 632.2 L909.8 634.6 L912.7 636.8 L915.2 638.8 L917.2 640.5 L919 642.1 L920.4 643.6 L921.6 644.9 L922.5 646.1 L923.3 647.2 L924 648.3 L924.6 649.3 L925.1 650.2 L925.3 651.1 L925.5 651.9 L925.4 652.5 L925.3 653.2 L925 653.7 L924.5 654.2 L924 654.6 L923.3 655 L922.5 655.2 L921.6 655.4 L920.5 655.6 L919.4 655.6 L918.1 655.7 L916.7 655.7 L915.2 655.6 L913.6 655.5 L911.8 655.2 L909.8 654.9 L907.8 654.5 L905.7 654.2 L903.6 653.8 L901.5 653.6 L899.5 653.5 L897.5 653.5 L895.5 653.7 L893.4 653.9 L891.3 654.2 L889.3 654.5 L887.4 654.8 L885.5 655 L883.8 655.1 L882.3 655.1 L881.1 655.1 L879.9 655 L878.9 654.9 L877.8 654.7 L876.5 654.5 L875.1 654.3 L873.3 654 L871.1 653.6 L868.6 653.2 L865.9 652.6 L863 652.1 L860.1 651.5 L857.3 651 L854.7 650.6 L852.4 650.4 L850.4 650.3 L848.7 650.4 L847.1 650.6 L845.6 650.8 L844.2 651 L842.8 651.3 L841.4 651.4 L839.8 651.4 L838.1 651.3 L836.4 651 L834.7 650.7 L833 650.3 L831.2 649.9 L829.5 649.6 L827.8 649.4 L826.2 649.3 L824.5 649.4 L822.8 649.6 L821 649.9 L819.3 650.2 L817.7 650.6 L816.2 650.9 L815 651.2 L814.1 651.4" stroke="#1e1e1e"/>
<path d="M792.6 584 L795 585.6 L798.3 587.6 L802.2 590.1 L806.5 592.9 L811 595.8 L815.5 598.6 L819.7 601.4 L823.5 603.8 L826.9 606 L830.1 608 L833.1 610 L836.1 611.9 L839 613.8 L842 615.8 L845 617.8 L848.2 620 L851.6 622.4 L855.4 625.1 L859.3 627.9 L863.2 630.7 L866.9 633.4 L870.3 635.9 L873.2 638.1 L875.4 639.9 L877 641.2 L878 642.1 L878.5 642.7 L878.7 643.1 L878.6 643.3 L878.4 643.5 L878.2 643.8 L878 644.1 L877.8 644.5 L877.5 645 L877 645.4 L876.5 645.9 L875.8 646.2 L875.1 646.5 L874.2 646.7 L873.3 646.7 L872.2 646.6 L870.9 646.2 L869.5 645.8 L868 645.2 L866.5 644.7 L865 644.2 L863.8 643.8 L862.8 643.6 L862.1 643.6 L861.8 643.7 L861.6 644 L861.6 644.3 L861.5 644.6 L861.2 644.9 L860.6 645.1 L859.7 645.1 L858.3 644.9 L856.5 644.6 L854.5 644.2 L852.3 643.8 L850.1 643.3 L847.9 642.9 L845.8 642.6 L844 642.5 L842.4 642.5 L840.9 642.7 L839.4 643 L838.1 643.3 L836.8 643.6 L835.6 644 L834.5 644.3 L833.5 644.6 L832.7 644.8 L832.1 645.1 L831.7 645.4 L831.3 645.6 L830.9 645.8 L830.3 646 L829.5 646.1 L828.3 646.2 L826.6 646.2 L824.5 646.1 L822.1 645.9 L819.6 645.8 L817.1 645.6 L814.8 645.4 L812.9 645.2 L811.5 645.1" stroke="#f01d1d"/>
<path d="M799.3 609.7 L800.5 610.5 L802.1 611.6 L804 612.8 L806.1 614.3 L808.4 615.8 L810.6 617.2 L812.8 618.7 L814.7 620 L816.5 621.2 L818.4 622.5 L820.3 623.8 L822.1 625 L823.9 626.2 L825.5 627.4 L827 628.4 L828.3 629.4 L829.4 630.3 L830.3 631 L831.2 631.7 L831.8 632.3 L832.4 632.9 L832.9 633.5 L833.2 634.1 L833.5 634.7 L833.7 635.4 L833.8 636.2 L833.8 636.9 L833.6 637.7 L833.4 638.4 L833.1 639.1 L832.6 639.6 L832 640 L831.2 640.2 L830.2 640.3 L829.1 640.4 L827.9 640.3 L826.6 640.1 L825.3 639.9 L824.1 639.7 L823 639.4 L822 639 L821.1 638.5 L820.1 637.8 L819.2 637.2 L818.4 636.5 L817.5 635.9 L816.6 635.5 L815.7 635.2 L814.7 635.1 L813.7 635.2 L812.6 635.4 L811.6 635.7 L810.6 636.1 L809.7 636.4 L809 636.6 L808.4 636.8" stroke="#1e1e1e"/>
<path d="M820.4 666.1 L822.3 665.8 L825.5 665 L827.6 662.9 L831.1 662.6 L834.6 662.5 L838.4 663.6 L843.1 664 L846.4 664.5 L850.5 665.9 L855.1 665.3 L859.5 665.4 L862.8 666 L866.8 667.5 L870.5 667.8 L874.7 669.1 L878.2 670.4 L882.8 671 L887.3 669.8 L891.3 669.8 L894.9 668.9 L897.2 668.9 L900.4 667.4 L902.5 667.5 L904.1 665.9 L907.2 665.6 L908.1 663.8 L909.1 663.2 L910 661.9" stroke="#1e1e1e"/>
<path d="M826.2 680.7 L828.4 680.6 L832.3 681.2 L836.9 682.1 L841.7 682.8 L847.1 682.7 L851.5 683.6 L857.1 684.3 L862.8 683.3 L868 682.9 L872.9 682.5 L877.8 681.9 L883.1 681.1 L890.6 682 L898.6 681.8 L907.1 681.7 L915 681.9 L921.5 681.9 L926.9 682.5 L932.4 683.6 L940.2 685.9 L951.2 688 L964.9 690.1 L979.3 693 L990.1 696.2 L998.1 700.5 L1005 704.7 L1010.6 708 L1015.4 712.5 L1019.5 716.2 L1023.3 721.2 L1024.7 724 L1028.5 728.2 L1030.6 731.3 L1033.6 733.6 L1035.9 735.6 L1037.9 737.6 L1038.9 739.4 L1041.2 742 L1041 743.7 L1041.7 745.6 L1041.1 747.8 L1040.8 749.3 L1040 750.5 L1039.7 753.7 L1039.8 757.5 L1042.1 761.8 L1045 765.9 L1047 770.4 L1047.6 772.5 L1048.5 773.7 L1050.4 775.4 L1052 778.2 L1056.3 782.6 L1060.6 788.7 L1064 794.1 L1068.5 799.4 L1070.2 804.3 L1071.5 810.1 L1072.3 814.2 L1072.6 817.4 L1073.5 818.9 L1074.6 818.4 L1074.5 820.1 L1075.2 824.1 L1076.1 833.3 L1075.6 846.2 L1076.6 858.8 L1077.5 869.8 L1079.2 878 L1081.5 884.8 L1083.6 890.4 L1084.8 895 L1084.6 898.1 L1083.5 899.7 L1082.3 901 L1081.7 903.3 L1082.2 907 L1083.2 911.4 L1084.3 915.9 L1085 920 L1085.4 923.4 L1085.8 926.5 L1085.5 929.6 L1084 933 L1080.6 937.1 L1075.9 941.7 L1070.9 946.1 L1066.8 949.6 L1063.8 952.1 L1061.3 953.8 L1059.4 955.1 L1058 956" stroke="#f01d1d"/>
<path d="M836.6 709 L837.5 708.6 L837.6 708.4 L837.4 706.5 L838.1 705.8 L836.5 704.6 L835.3 701.7 L833 699.8 L833.6 699 L835.8 697.3 L839.9 697.2 L843.5 696.9 L845.5 695.7 L847.9 697.2 L849 699.1 L849.1 699.8 L850.6 700.7 L852.4 700.7 L853.7 700.4 L857 700.1 L859.1 699.3 L860.2 701.3 L863.5 702.3 L864.6 703.3 L867.4 704.3 L872.2 704.2 L875.9 703.2 L879.9 701.7 L883.2 701.3 L886.4 699.3 L888.7 699.4 L891.1 697.8 L894 697.9 L898.5 696.9 L903.9 696.6 L910.3 696 L915.6 696.5 L920 697 L925.3 697.7 L930.7 698.1 L935.8 700.1 L942.4 700 L947.9 700.1 L952.9 701.5 L960.3 701.1 L967.4 703.1 L974.4 704.8 L983.3 705.3 L990.1 707.9 L997.1 710.7 L1004.8 714.1 L1010.1 717.5 L1014.7 719.9 L1018.4 723 L1019.2 724.7 L1021.2 728 L1021.8 730.2 L1022.8 733.3 L1023.7 736.9 L1025 740.9 L1025.5 744.8 L1026.4 746.9 L1027.7 751.2 L1029.6 753.3 L1030.7 756.7 L1031.5 759.6 L1033 762.7 L1035.4 765.7 L1036.9 770.3 L1039.1 774.9 L1043 780.7 L1045.1 787.7 L1048.4 792.4 L1049.6 795.8 L1051 799.4 L1053.5 802.3 L1053.5 804.4 L1054.1 808.8 L1055.9 813 L1056.5 815.7 L1056.2 820.1 L1057.3 821.6 L1059.6 825.1 L1060.3 826.7 L1060.2 827.9 L1059.9 829.4 L1058.4 829.7 L1055.6 829.8 L1053.9 832.4 L1053.7 835.8 L1051.9 839.7 L1050.1 844.2 L1049.2 850.2 L1047.6 856 L1046.3 862.7 L1045 869.6 L1044 876.1 L1043.3 882.5 L1042.9 889 L1042.6 894.8 L1041.9 899.2 L1042.1 901.2 L1042.9 901.5 L1042 901.7 L1037 903.5 L1026.4 907.9 L1011.6 913.8 L995.3 919.9 L980 925 L964.8 928.9 L948.9 932.3 L934.8 935.1 L925 937" stroke="#1e1e1e"/>
<path d="M1060.7 828 L1061.7 833.9 L1061 842.7 L1062.2 852 L1062 860 L1061.4 868 L1060.3 876.2 L1059.1 883.7 L1058 890 L1056.8 894.6 L1055.3 898 L1054.3 900.8 L1054 903.5 L1055 906.3 L1056.8 908.9 L1058.9 911.3 L1060.6 913.5 L1061.8 915.1 L1062.9 916.3 L1063.7 917.7 L1064 920 L1063.8 923.8 L1063.1 928.6 L1062.1 933.3 L1060.6 937 L1058.8 939.4 L1056.7 941.2 L1054 942.1 L1050.6 942 L1047 939.9 L1043 936.2 L1037.7 932.9 L1030 932 L1017.8 934.9 L1002.2 940.2 L987.3 945.8 L977 949.6" stroke="#1e1e1e"/>
<path d="M864.9 712.1 L867.6 710.8 L870.6 709.4 L874.9 708.5 L878.9 706.2 L885.1 706.1 L893.1 706.1 L898.6 706.7 L904.9 706.3 L908.2 706 L909.9 704.7 L912.4 703.8 L914.8 703.2 L919.2 703.9 L924.7 704.5 L931 703.9 L936.6 705.3 L940.7 705.6 L946.2 705.6 L953.1 707.4 L959.6 708.9 L970.5 711 L982.1 715 L994.5 717.9 L1002.2 720.7 L1006.9 722.1 L1009.2 723.3 L1009.4 725.2 L1010.1 727.7 L1011.7 729 L1010.8 732.2 L1012.3 735.8 L1012.4 739.5 L1014.1 745.5 L1017 751.9 L1020.3 760 L1022.4 766.6 L1025.5 776 L1028.6 784.8 L1030.6 794.5 L1033.5 802.8 L1035.6 809.4 L1038.3 816.5 L1040.4 822.3 L1040.6 827.9 L1040.5 833.5 L1037.8 839.3 L1034.9 844.1 L1033.6 849.4 L1032.4 853.4 L1031.5 857.3 L1030.9 861.2 L1030.4 865.6 L1030.3 870.9 L1030.5 876.9 L1030.6 882.4 L1030.4 886.6 L1029.9 888.8 L1029.2 889.6 L1028 889.9 L1026 890.5 L1022.9 891.4 L1019 892.3 L1014.6 893.3 L1010 894.5 L1005.5 895.9 L1000.9 897.5 L995.8 899.3 L990 901 L983.1 903 L975.3 905.2 L967.4 907.1 L960 908.3 L953.3 908.6 L947 908.3 L940.9 907.5 L935 906.5 L928.9 905 L922.6 902.9 L917.2 900.9 L913.4 899.5" stroke="#1e1e1e"/>
<path d="M841.7 721 L842.7 721 L845.4 719.1 L848.1 718.7 L849.9 718.4 L851.9 717.2 L853.3 716.5 L855.2 716.5 L857 716.5 L860.2 716.7 L862.5 717.2 L866.5 717.6 L868.8 719 L869.9 719.2 L872.3 721.1 L873.5 723.8 L875 724.7 L876.9 725.9 L880.1 726.9 L882.9 727.4 L887 727.6 L891.7 726.4 L895.8 724.1 L901.3 722.6 L906.8 722 L913.8 721.3 L922.2 719.9 L931.2 718 L940.6 718.6 L949.9 719 L960.1 720.6 L969.3 722.3 L978.2 723.6 L982.5 724.8 L986.9 724.7 L989.5 725.6 L992.5 727.5 L995.9 731.6 L998.2 736.4 L1000.3 741.3 L1002.2 745.7 L1003.9 751.1 L1007 754.9 L1009.5 759.3 L1012.9 764.7 L1015.6 770.6 L1018.4 776.3 L1020.3 782.9 L1023.3 787.6 L1025.8 794.8 L1028.7 800.3 L1031.4 805.9 L1033.3 811.3 L1033.6 815.2 L1030.5 816.8 L1028.4 818.4 L1027 821.5 L1027.3 824.5 L1028 828.7 L1028.5 832.8 L1027.1 836.4 L1025.2 841.2 L1021 846.5 L1016.9 851 L1014.7 855.2 L1014.3 858.5 L1015.1 861.3 L1016 863.7 L1016 866 L1014.9 868.2 L1013.2 870.3 L1010.9 872.2 L1008 874 L1004.4 875.7 L1000.1 877.4 L995.3 878.8 L990 880 L984.2 881 L977.8 881.8 L970.9 882.2 L963.6 882 L955.5 881.1 L946.7 879.6 L938 877.5 L930 875 L923.1 872.3 L916.8 869.3 L910.9 865.4 L905 860 L898.4 851.3 L892.3 840.9 L887.1 831.6 L882.7 824.8" stroke="#1e1e1e"/>
<path d="M808.5 635.6 L808.6 634.8 L810.9 635.2 L811.2 634.3 L813.5 634.2 L814.4 634.7 L816.5 635.5 L818.4 637 L820.4 637.7 L822.7 638.4 L825.5 639 L828.1 640.1 L830 640" stroke="#1e1e1e"/>
<path d="M846.1 720 L847.6 719.6 L851.3 717.9 L854.1 717.7 L857.1 715.9 L859.8 715.5 L861.8 714.1 L863.3 713.2 L864.9 712.1" stroke="#1e1e1e"/>
<path d="M866.8 728.5 L866.3 729.5 L865.7 730.9 L864.9 732.6 L864 734.4 L863.2 736.4 L862.3 738.3 L861.6 740.2 L861 742 L860.6 743.6 L860.2 745.3 L859.9 746.9 L859.6 748.5 L859.4 750.1 L859.2 751.7 L859.1 753.3 L859 755 L858.9 756.8 L858.9 758.7 L859 760.7 L859 762.7 L859.1 764.5 L859.2 766.2 L859.3 767.6 L859.3 768.7" stroke="#1e1e1e"/>
<path d="M885.2 743.6 L889.1 742.8 L893.3 741 L898 738.5 L903.9 736.8 L908.6 735.6 L913 733.2 L917.9 731.5 L921.9 730 L925.7 729.8 L930.2 728.5 L933 729.6 L935.8 728.6 L936.7 730.7 L938.4 731.6 L938.9 733.2 L939.8 733.2 L943.5 734.4 L947.9 733.1 L952.5 733.1 L956.7 733.9 L962.6 736.2 L968 737.3 L972.3 739.6 L976.7 743.7 L982 747.7 L986.6 752.8 L989.4 758.7 L994.2 764.9 L998.1 771.2 L1003.7 779.1 L1007.5 786.1 L1010.7 794.3 L1012 802.2 L1011 812.6 L1010.6 820.6 L1008.9 829.5 L1007.8 835.2 L1004.8 839.8 L1002.9 843.2 L1000.3 847.3 L998.7 850.1 L996.7 852.6 L994.3 854.4 L990.8 855.8 L986 856.9 L980.1 857.7 L973.7 857.9 L967.3 857.5 L960.8 856.4 L954 854.7 L947.2 852.3 L940.3 848.9 L933.9 844.9 L927 840.5 L920.7 835.2 L915.9 829.1 L910.3 822 L904.1 811.8 L899.2 802.8 L894.7 794.3 L891.8 784.4 L887.8 775.3 L885.3 766.5 L883.3 759.2 L883.1 753.7 L883.4 749 L885.3 746.5 L885.2 743.6" stroke="#f01d1d"/>
<path d="M903.6 753.6 L906.2 752.8 L910.3 751.5 L914.8 750.1 L918.4 748.3 L922.1 747.3 L925.7 747.5 L930.2 746.4 L934.5 745.7 L937.5 745.6 L942 745.2 L946.2 743.9 L949.5 743.8 L950.9 745.8 L951.2 747.7 L951.9 750.4 L954 752.7 L957.1 754.3 L960.2 755.9 L962.9 756.3 L968 759.2 L971.6 762 L977.3 763.8 L982 767.6 L986.3 772.3 L987.6 776.4 L987 781.6 L986.7 786 L987.4 790.1 L988.5 793.4 L990.4 797.2 L992.2 799.8 L991.9 804.4 L992.1 808.8 L992.2 812.7 L991.4 817.1 L991 822 L990 826.3 L988.6 831.8 L986.9 834.8 L983.9 837.7 L979.9 838.6 L973.9 838.2 L967.5 836.9 L960.7 834.3 L953.4 830.6 L946.7 826.8 L940.5 822.7 L933.9 817.6 L928.7 812 L923.2 805.3 L918 800.4 L913.1 793.7 L909.8 788.4 L907.1 781.7 L905.9 775.8 L903.7 770.9 L902.3 765.2 L902.5 761.2 L902.9 756.3 L903.6 753.6" stroke="#1e1e1e"/>
<path d="M924.6 771.2 L926.7 771 L928.4 768.9 L931.4 768.3 L934.1 767.8 L938.5 768.8 L943.3 771 L947.8 772.3 L951.2 774.3 L951.5 776.7 L952.2 778.7 L951.5 781.4 L951.9 783.6 L954.7 784.6 L958.2 785.8 L961.8 785.7 L964.2 786.7 L966.5 789.8 L966.2 791.8 L966.6 794.2 L967.8 796.9 L968.2 799.9 L968.4 802 L969.2 804.6 L970.5 807.3 L970.4 809.2 L970 809.6 L969.5 811.2 L967.5 810 L967.4 809.1 L965.3 805.9 L962.6 803.7 L961.1 799.9 L958.6 798.1 L954.3 797.2 L952.4 794.8 L949.1 793.2 L946.8 793 L943.8 791.5 L941.2 790.4 L938.9 789.2 L936.4 786.5 L933.1 784.2 L930.6 782 L929.5 780.2 L926.6 777.4 L926.7 775.6 L925.2 773.5 L924.6 771.2" stroke="#1e1e1e"/>
</g>
</g>
</svg>
<svg style="left:430px;top:745px" width="110" height="110"><path d="M8 55.5 H105 M56.5 7 V103" stroke="#111" stroke-width="1"/><rect x="50.5" y="49.5" width="12" height="12" fill="none" stroke="#111" stroke-width="1"/></svg>
<svg style="left:1838px;top:224px" width="75" height="22"><rect x="4" y="10" width="14" height="6" fill="#e6e6e6" stroke="#888" stroke-width="1.2"/><rect x="32" y="4" width="11" height="11" fill="#e6e6e6" stroke="#888" stroke-width="1.2"/><rect x="29" y="7" width="11" height="11" fill="#e6e6e6" stroke="#888" stroke-width="1.2"/><path d="M56 5 L67 16 M67 5 L56 16" stroke="#888" stroke-width="3"/><path d="M56 5 L67 16 M67 5 L56 16" stroke="#e6e6e6" stroke-width="1.2"/></svg>
<svg style="left:1760px;top:255px" width="150" height="200"><circle cx="72" cy="75.5" r="55" fill="none" stroke="#f7f7f7" stroke-width="14"/><rect x="45.5" y="49.5" width="53" height="53" fill="#ececec" stroke="#8a8a8a" stroke-width="1"/><rect x="55" y="59" width="34" height="34" fill="#dcdcdc"/><text x="72" y="81" text-anchor="middle" font-family="Liberation Sans" font-weight="bold" font-size="13" fill="#999">TOP</text><g font-family="Liberation Sans" font-weight="bold" font-size="19" fill="#eaeaea" stroke="#b8b8b8" stroke-width="0.8" text-anchor="middle"><text x="72" y="26">N</text><text x="13" y="85">W</text><text x="129" y="85">E</text><text x="72" y="142">S</text></g><rect x="32" y="167" width="80" height="18" rx="9" fill="#eef0f4"/><text x="63" y="181" text-anchor="middle" font-family="Liberation Sans" font-weight="bold" font-size="12" fill="#b5b5b5">Unnamed</text><path d="M97 172 H108 L102.5 179 Z" fill="none" stroke="#c0c0c0"/></svg>
<div class="t" style="left:0px;top:225px;font-size:15.5px;color:#222">[&#8722;][Top][2D Wireframe]</div>
<div class="a" style="left:90px;top:902px;width:1732px;height:48px;background:rgba(255,255,255,0.58);border:1px solid #ddd;border-radius:2px"></div>
<div class="a" style="left:91px;top:903px;width:71px;height:46px;background:rgba(225,225,225,0.8)"></div>
<svg style="left:90px;top:902px" width="115" height="48"><g fill="#999"><rect x="5" y="13" width="1.6" height="1.6"/><rect x="5" y="17" width="1.6" height="1.6"/><rect x="5" y="21" width="1.6" height="1.6"/><rect x="5" y="25" width="1.6" height="1.6"/><rect x="5" y="29" width="1.6" height="1.6"/><rect x="5" y="33" width="1.6" height="1.6"/><rect x="8.5" y="13" width="1.6" height="1.6"/><rect x="8.5" y="17" width="1.6" height="1.6"/><rect x="8.5" y="21" width="1.6" height="1.6"/><rect x="8.5" y="25" width="1.6" height="1.6"/><rect x="8.5" y="29" width="1.6" height="1.6"/><rect x="8.5" y="33" width="1.6" height="1.6"/></g><path d="M20 18 L30 28 M30 18 L20 28" stroke="#888" stroke-width="2.2"/><path d="M48 33 L58 23 M56 17 Q52 21 55 25 Q59 27 62 23 L64 19 L61 21 L58 19 L60 16 Z" fill="none" stroke="#aaa" stroke-width="1.5"/><rect x="77.5" y="16.5" width="18" height="14" fill="#f4f4f4" stroke="#999"/><rect x="78" y="17" width="17" height="3" fill="#999"/><path d="M80 23 L83 25 L80 27 M84 28 H88" stroke="#888" stroke-width="0.9" fill="none"/><path d="M100 22 H108 L104 27 Z" fill="#888"/></svg>
<svg style="left:1804px;top:920px" width="14" height="10"><path d="M3 9 H13 L8 4 Z" fill="#888"/></svg>
<div class="t" style="left:207px;top:920px;font-family:'Liberation Mono',monospace;font-style:italic;color:#999">Type a command</div>
<div class="a" style="left:0;top:950px;width:1915px;height:5px;background:#f0f0f0"></div>
<svg style="left:0;top:840px" width="100" height="100"><path d="M15.5 28 V90.5 H78" stroke="#111" stroke-width="1.2" fill="none"/><rect x="10.5" y="84.5" width="11" height="11" fill="none" stroke="#111" stroke-width="1.2"/><path d="M17 9 L24.5 17 L32 9 M24.5 17 V24" stroke="#111" stroke-width="1.2" fill="none"/><path d="M82 74 L96 88 M82 88 L96 74" stroke="#111" stroke-width="1.2" fill="none"/></svg>
</body></html>
